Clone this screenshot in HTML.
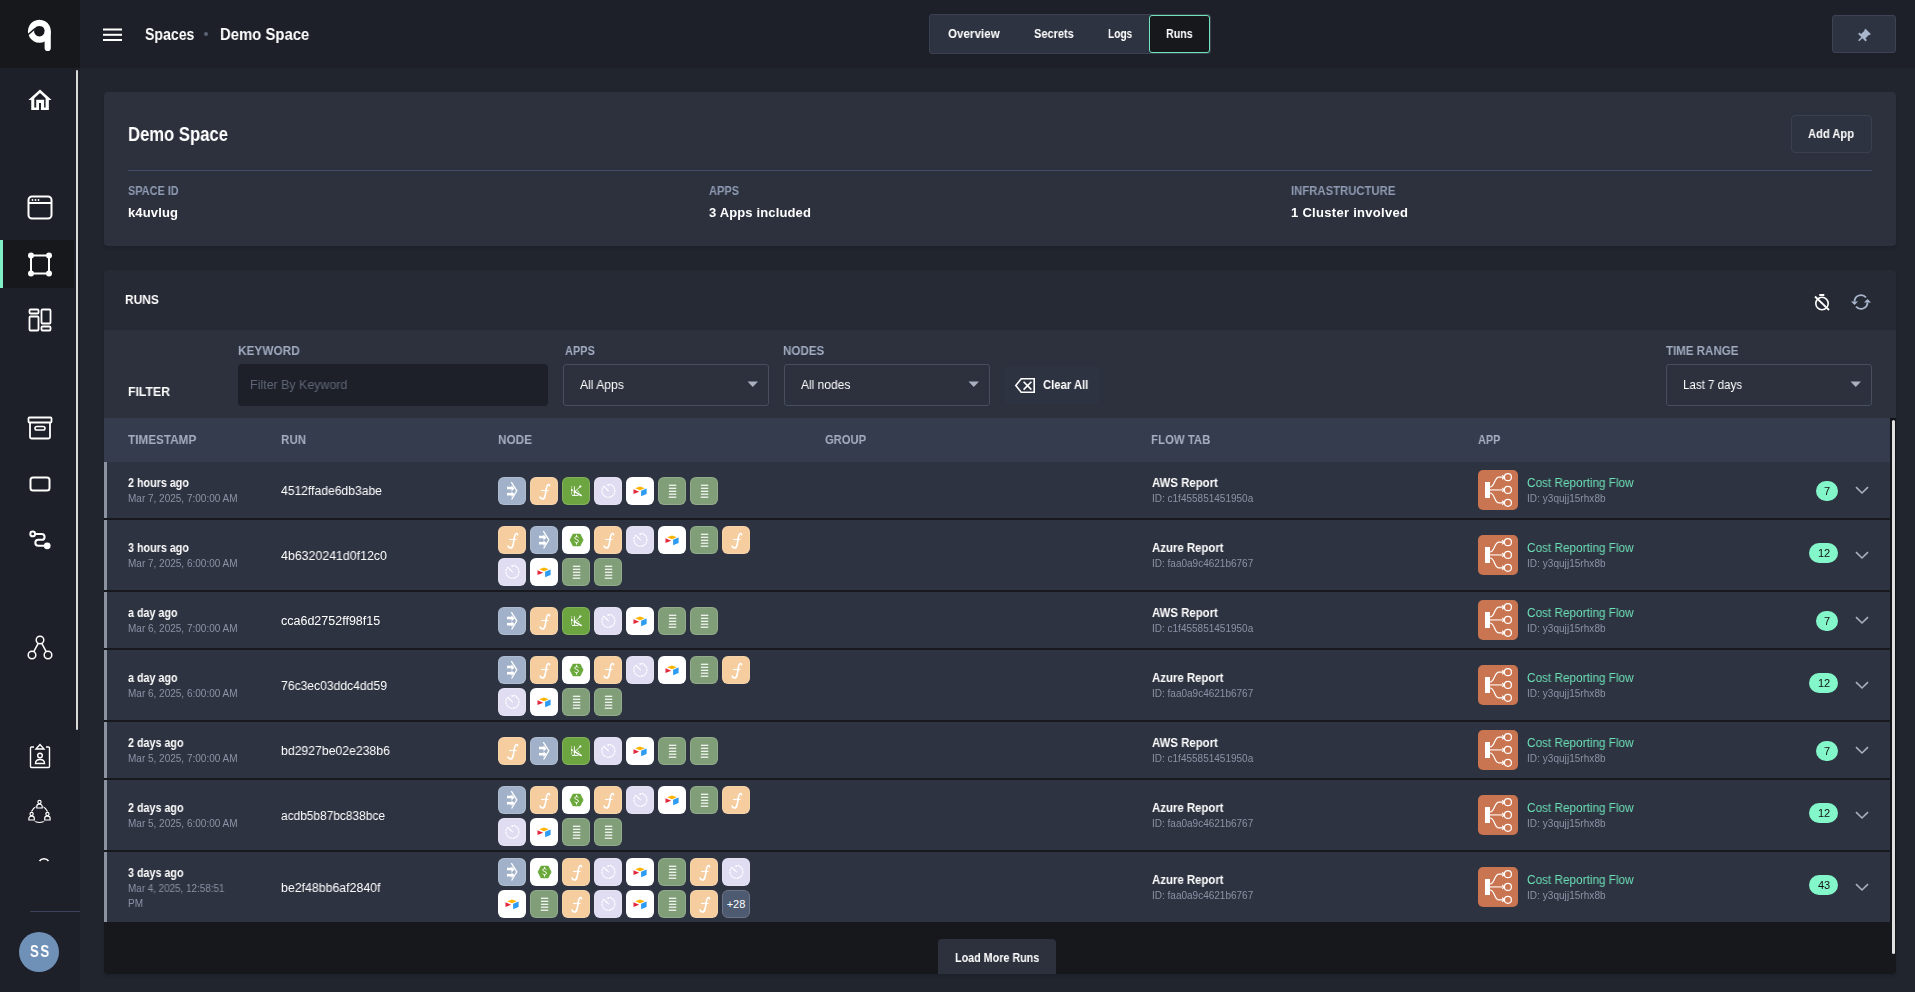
<!DOCTYPE html>
<html><head><meta charset="utf-8"><style>*{box-sizing:border-box;margin:0;padding:0}
html,body{width:1915px;height:992px;overflow:hidden;background:#21252e;font-family:"Liberation Sans",sans-serif;color:#fff}
.a{position:absolute}
.t{position:absolute;white-space:nowrap;will-change:transform}
svg{display:block}
</style></head><body>
<div class="a" style="left:0px;top:0px;width:80px;height:68px;background:#17181c;"></div>
<div class="a" style="left:80px;top:0px;width:1835px;height:68px;background:#1d2029;"></div>
<div class="a" style="left:0px;top:68px;width:80px;height:924px;background:#1d2029;"></div>
<div class="a" style="left:0px;top:240px;width:74px;height:48px;background:#17181c;"></div>
<div class="a" style="left:0px;top:240px;width:3px;height:48px;background:#7ff0c6;"></div>
<div class="a" style="left:76px;top:70px;width:2px;height:660px;background:#d9d9d9;border-radius:1px"></div>
<div class="a" style="left:30px;top:911px;width:50px;height:1px;background:#3b4259;"></div>
<div class="a" style="left:19px;top:932px;width:40px;height:40px;border-radius:50%;background:#6f91b8"></div>
<svg class="a" style="left:20px;top:12px;" width="40" height="46" viewBox="0 0 40 46"><path fill-rule="evenodd" d="M19.4 7.7a11.5 11.5 0 1 0 0.01 0zM19.4 13.9a5.3 5.3 0 1 1 -0.01 0z" fill="#fff"/><path d="M24.6 19.2h6.2v16.7a3.1 3.1 0 0 1 -6.2 0z" fill="#fff"/><line x1="6.5" y1="24" x2="15" y2="16.6" stroke="#17181c" stroke-width="1.5"/></svg>
<svg class="a" style="left:22px;top:82px;" width="36" height="36" viewBox="0 0 36 36"><path fill-rule="evenodd" d="M18 7.4L29.6 18.1H26.85V28H9.25V18.1H6.35zM18 10.9L23.6 16.3V25.4H12.3V16.3z" fill="#fff"/><path d="M14.2 28V17.8H22.1V28H18.9V21H17.05V28z" fill="#fff"/><rect x="17.05" y="21" width="1.85" height="7.5" fill="#1d2029"/></svg>
<svg class="a" style="left:27px;top:195px;" width="26" height="26" viewBox="0 0 26 26"><rect x="1.5" y="1.5" width="23" height="22" rx="3.5" fill="none" stroke="#fff" stroke-width="2"/><line x1="1.5" y1="8" x2="24.5" y2="8" stroke="#fff" stroke-width="2"/><circle cx="5.5" cy="5" r="0.9" fill="#fff"/><circle cx="8.5" cy="5" r="0.9" fill="#fff"/><circle cx="11.5" cy="5" r="0.9" fill="#fff"/></svg>
<svg class="a" style="left:27px;top:251px;" width="26" height="27" viewBox="0 0 26 27"><rect x="4" y="4.5" width="18" height="18" fill="none" stroke="#fff" stroke-width="2"/><circle cx="4" cy="4.5" r="3" fill="#fff"/><circle cx="22" cy="4.5" r="3" fill="#fff"/><circle cx="4" cy="22.5" r="3" fill="#fff"/><circle cx="22" cy="22.5" r="3" fill="#fff"/></svg>
<svg class="a" style="left:28px;top:308px;" width="24" height="24" viewBox="0 0 24 24"><rect x="1.5" y="1.5" width="9" height="4" rx="1" fill="none" stroke="#fff" stroke-width="1.8"/><rect x="1.5" y="8.5" width="9" height="14" rx="1" fill="none" stroke="#fff" stroke-width="1.8"/><rect x="13.5" y="1.5" width="9" height="14" rx="1" fill="none" stroke="#fff" stroke-width="1.8"/><rect x="13.5" y="18.5" width="9" height="4" rx="1" fill="none" stroke="#fff" stroke-width="1.8"/></svg>
<svg class="a" style="left:27px;top:416px;" width="26" height="24" viewBox="0 0 26 24"><rect x="1.5" y="1.5" width="23" height="5" rx="1" fill="none" stroke="#fff" stroke-width="1.8"/><path d="M3 6.5v14.5a1.5 1.5 0 0 0 1.5 1.5h17a1.5 1.5 0 0 0 1.5-1.5V6.5" fill="none" stroke="#fff" stroke-width="1.8"/><rect x="8" y="10.5" width="10" height="3.5" rx="1.75" fill="none" stroke="#fff" stroke-width="1.6"/></svg>
<svg class="a" style="left:29px;top:476px;" width="22" height="16" viewBox="0 0 22 16"><rect x="1.5" y="1.5" width="19" height="13" rx="2.5" fill="none" stroke="#fff" stroke-width="2"/></svg>
<svg class="a" style="left:28px;top:529px;" width="24" height="22" viewBox="0 0 24 22"><circle cx="4.7" cy="4.9" r="2.4" fill="none" stroke="#fff" stroke-width="2"/><circle cx="19.2" cy="16.8" r="3.4" fill="#fff"/><path d="M6.8 4.9H13.6A2.97 2.97 0 0 1 13.6 10.85H10.3A2.97 2.97 0 0 0 10.3 16.8H17" fill="none" stroke="#fff" stroke-width="2"/></svg>
<svg class="a" style="left:27px;top:635px;" width="26" height="26" viewBox="0 0 26 26"><circle cx="13" cy="5" r="3.8" fill="none" stroke="#fff" stroke-width="1.5"/><circle cx="5" cy="20" r="3.8" fill="none" stroke="#fff" stroke-width="1.5"/><circle cx="21" cy="20" r="3.8" fill="none" stroke="#fff" stroke-width="1.5"/><line x1="11.2" y1="8.3" x2="6.8" y2="16.7" stroke="#fff" stroke-width="1.5"/><line x1="14.8" y1="8.3" x2="19.2" y2="16.7" stroke="#fff" stroke-width="1.5"/></svg>
<svg class="a" style="left:29px;top:743px;" width="22" height="26" viewBox="0 0 22 26"><path d="M5 4H2.5A1 1 0 0 0 1.5 5v18.5a1 1 0 0 0 1 1h17a1 1 0 0 0 1-1V5a1 1 0 0 0-1-1H17" fill="none" stroke="#fff" stroke-width="1.4"/><path d="M7 6l4-4.5 4 4.5z" fill="none" stroke="#fff" stroke-width="1.4"/><circle cx="11" cy="12.5" r="2.3" fill="none" stroke="#fff" stroke-width="1.4"/><path d="M6.5 20.5c0-3 2-4 4.5-4s4.5 1 4.5 4z" fill="none" stroke="#fff" stroke-width="1.4"/></svg>
<svg class="a" style="left:28px;top:799px;" width="24" height="25" viewBox="0 0 24 25"><circle cx="11.5" cy="15.2" r="8.3" fill="none" stroke="#fff" stroke-width="1.2"/><rect x="7.5" y="0.5" width="8" height="10" fill="#1d2029"/><circle cx="11.5" cy="3" r="1.6" fill="none" stroke="#fff" stroke-width="1.2"/><path d="M8.8 9v-1.6a2.2 2.2 0 0 1 2.2-2.2h1a2.2 2.2 0 0 1 2.2 2.2v1.6z" fill="none" stroke="#fff" stroke-width="1.2"/><rect x="-0.3999999999999999" y="12.5" width="8" height="10" fill="#1d2029"/><circle cx="3.6" cy="15" r="1.6" fill="none" stroke="#fff" stroke-width="1.2"/><path d="M0.8999999999999999 21v-1.6a2.2 2.2 0 0 1 2.2-2.2h1a2.2 2.2 0 0 1 2.2 2.2v1.6z" fill="none" stroke="#fff" stroke-width="1.2"/><rect x="15.399999999999999" y="12.5" width="8" height="10" fill="#1d2029"/><circle cx="19.4" cy="15" r="1.6" fill="none" stroke="#fff" stroke-width="1.2"/><path d="M16.7 21v-1.6a2.2 2.2 0 0 1 2.2-2.2h1a2.2 2.2 0 0 1 2.2 2.2v1.6z" fill="none" stroke="#fff" stroke-width="1.2"/></svg>
<svg class="a" style="left:38px;top:855px;" width="12" height="8" viewBox="0 0 12 8"><path d="M1.5 6a5 4 0 0 1 9 0" fill="none" stroke="#fff" stroke-width="1.5"/></svg>
<svg class="a" style="left:103px;top:28px;" width="20" height="14" viewBox="0 0 20 14"><rect x="0" y="0.5" width="19" height="2" fill="#fff"/><rect x="0" y="5.8" width="19" height="2" fill="#fff"/><rect x="0" y="11" width="19" height="2" fill="#fff"/></svg>
<div class="a" style="left:204px;top:32px;width:4px;height:4px;border-radius:50%;background:#5d6376"></div>
<div class="a" style="left:929px;top:14px;width:282px;height:40px;border-radius:3px;background:#2e3341;border:1px solid #3b4150"></div>
<div class="a" style="left:1149px;top:15px;width:61px;height:38px;border-radius:3px;background:#17181c;border:1.5px solid #6fe3ba"></div>
<div class="a" style="left:1832px;top:15px;width:64px;height:38px;border-radius:3px;background:#2e3341;border:1px solid #3d4354"></div>
<svg class="a" style="left:1850px;top:20px;" width="30" height="30" viewBox="0 0 30 30"><path transform="translate(13.2 16.3) rotate(45)" fill="#a9b5cc" d="M-3.8 -7H3.8V-5.2H3.1V0H5.3V1.9H0.75V6.4H-0.75V1.9H-5.3V0H-3.1V-5.2H-3.8Z"/></svg>
<div class="a" style="left:104px;top:92px;width:1792px;height:154px;background:#2c313d;border-radius:4px;box-shadow:0 2px 3px rgba(0,0,0,.12)"></div>
<div class="a" style="left:128px;top:170px;width:1744px;height:1px;background:#434c66;"></div>
<div class="a" style="left:1791px;top:115px;width:81px;height:38px;border-radius:4px;background:#2e3341;border:1px solid #3a404f"></div>
<div class="a" style="left:104px;top:270px;width:1792px;height:704px;background:#262a35;border-radius:4px;box-shadow:0 2px 3px rgba(0,0,0,.12)"></div>
<div class="a" style="left:104px;top:330px;width:1792px;height:88px;background:#2c313d;"></div>
<div class="a" style="left:104px;top:418px;width:1786px;height:44px;background:#353c4e;"></div>
<div class="a" style="left:104px;top:922px;width:1792px;height:52px;background:#17181c;border-radius:0 0 4px 4px"></div>
<svg class="a" style="left:1812px;top:292px;" width="20" height="20" viewBox="0 0 20 20"><rect x="7.3" y="2" width="5" height="2" fill="#fff"/><circle cx="10" cy="11.5" r="6.2" fill="none" stroke="#fff" stroke-width="1.6"/><line x1="3" y1="4.5" x2="17" y2="18" stroke="#fff" stroke-width="1.8"/></svg>
<svg class="a" style="left:1850px;top:292px;" width="22" height="20" viewBox="0 0 22 20"><path d="M4.5 9.5a6.5 6.5 0 0 1 11.5-4" fill="none" stroke="#a9b5cc" stroke-width="1.8"/><path d="M17.5 10.5a6.5 6.5 0 0 1-11.5 4" fill="none" stroke="#a9b5cc" stroke-width="1.8"/><path d="M1 9.5h7l-3.5 3.5z" fill="#a9b5cc"/><path d="M21 10.5h-7l3.5-3.5z" fill="#a9b5cc"/></svg>
<div class="a" style="left:238px;top:364px;width:310px;height:42px;border-radius:4px;background:#1d2029"></div>
<div class="a" style="left:563px;top:364px;width:206px;height:42px;border-radius:3px;background:#2c313d;border:1px solid #474e5e"></div>
<svg class="a" style="left:747px;top:381px;" width="12" height="7" viewBox="0 0 12 7"><path d="M0.5 0.5h10.5L5.75 6z" fill="#a9b0bf"/></svg>
<div class="a" style="left:784px;top:364px;width:206px;height:42px;border-radius:3px;background:#2c313d;border:1px solid #474e5e"></div>
<svg class="a" style="left:968px;top:381px;" width="12" height="7" viewBox="0 0 12 7"><path d="M0.5 0.5h10.5L5.75 6z" fill="#a9b0bf"/></svg>
<div class="a" style="left:1666px;top:364px;width:206px;height:42px;border-radius:3px;background:#2c313d;border:1px solid #474e5e"></div>
<svg class="a" style="left:1850px;top:381px;" width="12" height="7" viewBox="0 0 12 7"><path d="M0.5 0.5h10.5L5.75 6z" fill="#a9b0bf"/></svg>
<div class="a" style="left:1005px;top:366px;width:94px;height:38px;border-radius:4px;background:#2e3342"></div>
<svg class="a" style="left:1014px;top:377px;" width="23" height="18" viewBox="0 0 23 18"><path d="M7.2 1.8H20.2V15.3H7.2L1.8 8.55z" fill="none" stroke="#fff" stroke-width="1.6" stroke-linejoin="miter"/><path d="M9.6 4.8l7.8 7.8M17.4 4.8l-7.8 7.8" stroke="#fff" stroke-width="1.6"/></svg>
<div class="a" style="left:104px;top:462px;width:1786px;height:56px;background:#2e3341;"></div>
<div class="a" style="left:104px;top:462px;width:3px;height:56px;background:#8b93a3;"></div>
<div class="a" style="left:104px;top:518px;width:1786px;height:2px;background:#18191d;"></div>
<div class="a" style="left:498px;top:477.0px;width:28px;height:28px;border-radius:6px;background:#a0b1c9;box-shadow:inset 0 0 0 1px rgba(255,255,255,.14)"></div>
<svg class="a" style="left:498px;top:477.0px;" width="28" height="28" viewBox="0 0 28 28"><rect x="9" y="9.7" width="5.5" height="2.6" fill="#fff"/><rect x="9" y="15.9" width="5.5" height="2.6" fill="#fff"/><path d="M13.3 5.2L18.8 13.8 13.6 22.5" fill="none" stroke="#fff" stroke-width="1.3"/><path d="M13.5 8.5l3 3-3 3z M13.5 14.5l3 2.5-3 3z" fill="#fff"/></svg>
<div class="a" style="left:530px;top:477.0px;width:28px;height:28px;border-radius:6px;background:#f5cd9e;box-shadow:inset 0 0 0 1px rgba(255,255,255,.14)"></div>
<svg class="a" style="left:530px;top:477.0px;" width="28" height="28" viewBox="0 0 28 28"><path d="M19.6 8.6c-.2-1.3-1.3-1.4-2-.6-1.6 1.7-1.6 7.5-2.6 11.2-.6 2.3-1.8 2.9-2.9 2.7-1-.2-1.7-1-2-1.8" fill="none" stroke="#fff" stroke-width="1.7" stroke-linecap="round"/><line x1="11" y1="13.5" x2="18.7" y2="13.5" stroke="#fff" stroke-width="1.1"/></svg>
<div class="a" style="left:562px;top:477.0px;width:28px;height:28px;border-radius:6px;background:#6da540;box-shadow:inset 0 0 0 1px rgba(255,255,255,.14)"></div>
<svg class="a" style="left:562px;top:477.0px;" width="28" height="28" viewBox="0 0 28 28"><g stroke="#fff" fill="none"><line x1="9.6" y1="9.3" x2="9.6" y2="18" stroke-width="1" stroke-dasharray=".9 .5" opacity=".8"/><line x1="12.4" y1="9.3" x2="12.4" y2="18" stroke-width=".9"/><line x1="10" y1="18.4" x2="16.5" y2="18.4" stroke-width="1"/><path d="M12.7 14.7L18.3 9.6" stroke-width=".9"/><path d="M17 9.4h2.6M18.3 8.1v2.6" stroke-width=".8"/><path d="M13 14.9L19.2 18.5" stroke-width="1.5" stroke-linecap="round"/><path d="M15.3 13.5l2 2" stroke-width=".9"/></g><circle cx="9.9" cy="13.3" r="1" fill="#fff"/><circle cx="12.7" cy="14.7" r="1.2" fill="#fff"/></svg>
<div class="a" style="left:594px;top:477.0px;width:28px;height:28px;border-radius:6px;background:#e0dcf2;box-shadow:inset 0 0 0 1px rgba(255,255,255,.14)"></div>
<svg class="a" style="left:594px;top:477.0px;" width="28" height="28" viewBox="0 0 28 28"><path d="M15.6 7.4A6.5 6.5 0 1 1 9.8 9.2" fill="none" stroke="#fff" stroke-width="1.2" stroke-dasharray="2.2 .5"/><line x1="10" y1="9.4" x2="14.4" y2="13.9" stroke="#fff" stroke-width="1.2" stroke-linecap="round"/><circle cx="14.3" cy="8" r="1.05" fill="#fff"/></svg>
<div class="a" style="left:626px;top:477.0px;width:28px;height:28px;border-radius:6px;background:#ffffff;box-shadow:inset 0 0 0 1px rgba(255,255,255,.14)"></div>
<svg class="a" style="left:626px;top:477.0px;" width="28" height="28" viewBox="0 0 28 28"><path d="M14 9.5l4.8 1.8-4.8 1.9-4.8-1.9z" fill="#fcb400"/><path d="M15.1 13.8v5.5l5.5-2.2v-5.5z" fill="#2d9cf0"/><path d="M7.5 12.3v4.8l5.7-2.3z" fill="#e0283c"/></svg>
<div class="a" style="left:658px;top:477.0px;width:28px;height:28px;border-radius:6px;background:#809e77;box-shadow:inset 0 0 0 1px rgba(255,255,255,.14)"></div>
<svg class="a" style="left:658px;top:477.0px;" width="28" height="28" viewBox="0 0 28 28"><g stroke="#fff" stroke-width="1.3" opacity=".9"><line x1="10.9" y1="8.3" x2="18.3" y2="8.3"/><line x1="10.9" y1="11.3" x2="18.3" y2="11.3"/><line x1="10.9" y1="14.3" x2="18.3" y2="14.3"/><line x1="10.9" y1="17.2" x2="18.3" y2="17.2"/><line x1="10.7" y1="20.2" x2="18.3" y2="20.2"/></g></svg>
<div class="a" style="left:690px;top:477.0px;width:28px;height:28px;border-radius:6px;background:#809e77;box-shadow:inset 0 0 0 1px rgba(255,255,255,.14)"></div>
<svg class="a" style="left:690px;top:477.0px;" width="28" height="28" viewBox="0 0 28 28"><g stroke="#fff" stroke-width="1.3" opacity=".9"><line x1="10.9" y1="8.3" x2="18.3" y2="8.3"/><line x1="10.9" y1="11.3" x2="18.3" y2="11.3"/><line x1="10.9" y1="14.3" x2="18.3" y2="14.3"/><line x1="10.9" y1="17.2" x2="18.3" y2="17.2"/><line x1="10.7" y1="20.2" x2="18.3" y2="20.2"/></g></svg>
<div class="a" style="left:1478px;top:470.0px;width:40px;height:40px;background:#c97551;border-radius:5px"></div>
<svg class="a" style="left:1478px;top:470.0px;" width="40" height="40" viewBox="0 0 40 40"><rect x="7" y="12" width="5" height="16" fill="#fff"/><g fill="none" stroke="#fff" stroke-width="1.2"><path d="M12 17c5 0 4-9.8 9-9.8h5.4"/><path d="M12 19.9h14.4" stroke-width="1.6" stroke="#f0d2c4"/><path d="M12 23c5 0 4 9.8 9 9.8h5.4"/><circle cx="29.9" cy="7.2" r="3.5"/><circle cx="29.9" cy="19.9" r="3.5"/><circle cx="29.9" cy="32.8" r="3.5"/><path d="M24.2 5.2l2.2 2-2.2 2M24.2 17.9l2.2 2-2.2 2M24.2 30.8l2.2 2-2.2 2"/></g></svg>
<div class="a" style="left:1816px;top:481.0px;width:22px;height:20px;border-radius:10px;background:#84f7ca"></div>
<svg class="a" style="left:1855px;top:486.0px;" width="14" height="9" viewBox="0 0 14 9"><path d="M1 1.2l6 5.8 6-5.8" fill="none" stroke="#a9b0c0" stroke-width="1.6"/></svg>
<div class="a" style="left:104px;top:520px;width:1786px;height:70px;background:#2e3341;"></div>
<div class="a" style="left:104px;top:520px;width:3px;height:70px;background:#8b93a3;"></div>
<div class="a" style="left:104px;top:590px;width:1786px;height:2px;background:#18191d;"></div>
<div class="a" style="left:498px;top:526.0px;width:28px;height:28px;border-radius:6px;background:#f5cd9e;box-shadow:inset 0 0 0 1px rgba(255,255,255,.14)"></div>
<svg class="a" style="left:498px;top:526.0px;" width="28" height="28" viewBox="0 0 28 28"><path d="M19.6 8.6c-.2-1.3-1.3-1.4-2-.6-1.6 1.7-1.6 7.5-2.6 11.2-.6 2.3-1.8 2.9-2.9 2.7-1-.2-1.7-1-2-1.8" fill="none" stroke="#fff" stroke-width="1.7" stroke-linecap="round"/><line x1="11" y1="13.5" x2="18.7" y2="13.5" stroke="#fff" stroke-width="1.1"/></svg>
<div class="a" style="left:530px;top:526.0px;width:28px;height:28px;border-radius:6px;background:#a0b1c9;box-shadow:inset 0 0 0 1px rgba(255,255,255,.14)"></div>
<svg class="a" style="left:530px;top:526.0px;" width="28" height="28" viewBox="0 0 28 28"><rect x="9" y="9.7" width="5.5" height="2.6" fill="#fff"/><rect x="9" y="15.9" width="5.5" height="2.6" fill="#fff"/><path d="M13.3 5.2L18.8 13.8 13.6 22.5" fill="none" stroke="#fff" stroke-width="1.3"/><path d="M13.5 8.5l3 3-3 3z M13.5 14.5l3 2.5-3 3z" fill="#fff"/></svg>
<div class="a" style="left:562px;top:526.0px;width:28px;height:28px;border-radius:6px;background:#ffffff;box-shadow:inset 0 0 0 1px rgba(255,255,255,.14)"></div>
<svg class="a" style="left:562px;top:526.0px;" width="28" height="28" viewBox="0 0 28 28"><path d="M11 8.1h7.2l3 5.9-3 5.9H11L8 14z" fill="#6aa83a" stroke="#6aa83a" stroke-width=".6" stroke-linejoin="round"/><path d="M16.3 11.6c-.4-.7-1-1-1.8-1-1 0-1.7.5-1.7 1.3 0 1.9 3.6 1.1 3.6 3.3 0 .9-.8 1.5-1.9 1.5-.9 0-1.6-.4-2-1.1M14.6 8.9v1.7M14.6 16.7v2" fill="none" stroke="#fff" stroke-width="1"/></svg>
<div class="a" style="left:594px;top:526.0px;width:28px;height:28px;border-radius:6px;background:#f5cd9e;box-shadow:inset 0 0 0 1px rgba(255,255,255,.14)"></div>
<svg class="a" style="left:594px;top:526.0px;" width="28" height="28" viewBox="0 0 28 28"><path d="M19.6 8.6c-.2-1.3-1.3-1.4-2-.6-1.6 1.7-1.6 7.5-2.6 11.2-.6 2.3-1.8 2.9-2.9 2.7-1-.2-1.7-1-2-1.8" fill="none" stroke="#fff" stroke-width="1.7" stroke-linecap="round"/><line x1="11" y1="13.5" x2="18.7" y2="13.5" stroke="#fff" stroke-width="1.1"/></svg>
<div class="a" style="left:626px;top:526.0px;width:28px;height:28px;border-radius:6px;background:#e0dcf2;box-shadow:inset 0 0 0 1px rgba(255,255,255,.14)"></div>
<svg class="a" style="left:626px;top:526.0px;" width="28" height="28" viewBox="0 0 28 28"><path d="M15.6 7.4A6.5 6.5 0 1 1 9.8 9.2" fill="none" stroke="#fff" stroke-width="1.2" stroke-dasharray="2.2 .5"/><line x1="10" y1="9.4" x2="14.4" y2="13.9" stroke="#fff" stroke-width="1.2" stroke-linecap="round"/><circle cx="14.3" cy="8" r="1.05" fill="#fff"/></svg>
<div class="a" style="left:658px;top:526.0px;width:28px;height:28px;border-radius:6px;background:#ffffff;box-shadow:inset 0 0 0 1px rgba(255,255,255,.14)"></div>
<svg class="a" style="left:658px;top:526.0px;" width="28" height="28" viewBox="0 0 28 28"><path d="M14 9.5l4.8 1.8-4.8 1.9-4.8-1.9z" fill="#fcb400"/><path d="M15.1 13.8v5.5l5.5-2.2v-5.5z" fill="#2d9cf0"/><path d="M7.5 12.3v4.8l5.7-2.3z" fill="#e0283c"/></svg>
<div class="a" style="left:690px;top:526.0px;width:28px;height:28px;border-radius:6px;background:#809e77;box-shadow:inset 0 0 0 1px rgba(255,255,255,.14)"></div>
<svg class="a" style="left:690px;top:526.0px;" width="28" height="28" viewBox="0 0 28 28"><g stroke="#fff" stroke-width="1.3" opacity=".9"><line x1="10.9" y1="8.3" x2="18.3" y2="8.3"/><line x1="10.9" y1="11.3" x2="18.3" y2="11.3"/><line x1="10.9" y1="14.3" x2="18.3" y2="14.3"/><line x1="10.9" y1="17.2" x2="18.3" y2="17.2"/><line x1="10.7" y1="20.2" x2="18.3" y2="20.2"/></g></svg>
<div class="a" style="left:722px;top:526.0px;width:28px;height:28px;border-radius:6px;background:#f5cd9e;box-shadow:inset 0 0 0 1px rgba(255,255,255,.14)"></div>
<svg class="a" style="left:722px;top:526.0px;" width="28" height="28" viewBox="0 0 28 28"><path d="M19.6 8.6c-.2-1.3-1.3-1.4-2-.6-1.6 1.7-1.6 7.5-2.6 11.2-.6 2.3-1.8 2.9-2.9 2.7-1-.2-1.7-1-2-1.8" fill="none" stroke="#fff" stroke-width="1.7" stroke-linecap="round"/><line x1="11" y1="13.5" x2="18.7" y2="13.5" stroke="#fff" stroke-width="1.1"/></svg>
<div class="a" style="left:498px;top:558.0px;width:28px;height:28px;border-radius:6px;background:#e0dcf2;box-shadow:inset 0 0 0 1px rgba(255,255,255,.14)"></div>
<svg class="a" style="left:498px;top:558.0px;" width="28" height="28" viewBox="0 0 28 28"><path d="M15.6 7.4A6.5 6.5 0 1 1 9.8 9.2" fill="none" stroke="#fff" stroke-width="1.2" stroke-dasharray="2.2 .5"/><line x1="10" y1="9.4" x2="14.4" y2="13.9" stroke="#fff" stroke-width="1.2" stroke-linecap="round"/><circle cx="14.3" cy="8" r="1.05" fill="#fff"/></svg>
<div class="a" style="left:530px;top:558.0px;width:28px;height:28px;border-radius:6px;background:#ffffff;box-shadow:inset 0 0 0 1px rgba(255,255,255,.14)"></div>
<svg class="a" style="left:530px;top:558.0px;" width="28" height="28" viewBox="0 0 28 28"><path d="M14 9.5l4.8 1.8-4.8 1.9-4.8-1.9z" fill="#fcb400"/><path d="M15.1 13.8v5.5l5.5-2.2v-5.5z" fill="#2d9cf0"/><path d="M7.5 12.3v4.8l5.7-2.3z" fill="#e0283c"/></svg>
<div class="a" style="left:562px;top:558.0px;width:28px;height:28px;border-radius:6px;background:#809e77;box-shadow:inset 0 0 0 1px rgba(255,255,255,.14)"></div>
<svg class="a" style="left:562px;top:558.0px;" width="28" height="28" viewBox="0 0 28 28"><g stroke="#fff" stroke-width="1.3" opacity=".9"><line x1="10.9" y1="8.3" x2="18.3" y2="8.3"/><line x1="10.9" y1="11.3" x2="18.3" y2="11.3"/><line x1="10.9" y1="14.3" x2="18.3" y2="14.3"/><line x1="10.9" y1="17.2" x2="18.3" y2="17.2"/><line x1="10.7" y1="20.2" x2="18.3" y2="20.2"/></g></svg>
<div class="a" style="left:594px;top:558.0px;width:28px;height:28px;border-radius:6px;background:#809e77;box-shadow:inset 0 0 0 1px rgba(255,255,255,.14)"></div>
<svg class="a" style="left:594px;top:558.0px;" width="28" height="28" viewBox="0 0 28 28"><g stroke="#fff" stroke-width="1.3" opacity=".9"><line x1="10.9" y1="8.3" x2="18.3" y2="8.3"/><line x1="10.9" y1="11.3" x2="18.3" y2="11.3"/><line x1="10.9" y1="14.3" x2="18.3" y2="14.3"/><line x1="10.9" y1="17.2" x2="18.3" y2="17.2"/><line x1="10.7" y1="20.2" x2="18.3" y2="20.2"/></g></svg>
<div class="a" style="left:1478px;top:535.0px;width:40px;height:40px;background:#c97551;border-radius:5px"></div>
<svg class="a" style="left:1478px;top:535.0px;" width="40" height="40" viewBox="0 0 40 40"><rect x="7" y="12" width="5" height="16" fill="#fff"/><g fill="none" stroke="#fff" stroke-width="1.2"><path d="M12 17c5 0 4-9.8 9-9.8h5.4"/><path d="M12 19.9h14.4" stroke-width="1.6" stroke="#f0d2c4"/><path d="M12 23c5 0 4 9.8 9 9.8h5.4"/><circle cx="29.9" cy="7.2" r="3.5"/><circle cx="29.9" cy="19.9" r="3.5"/><circle cx="29.9" cy="32.8" r="3.5"/><path d="M24.2 5.2l2.2 2-2.2 2M24.2 17.9l2.2 2-2.2 2M24.2 30.8l2.2 2-2.2 2"/></g></svg>
<div class="a" style="left:1809px;top:543.0px;width:29px;height:20px;border-radius:10px;background:#84f7ca"></div>
<svg class="a" style="left:1855px;top:551.0px;" width="14" height="9" viewBox="0 0 14 9"><path d="M1 1.2l6 5.8 6-5.8" fill="none" stroke="#a9b0c0" stroke-width="1.6"/></svg>
<div class="a" style="left:104px;top:592px;width:1786px;height:56px;background:#2e3341;"></div>
<div class="a" style="left:104px;top:592px;width:3px;height:56px;background:#8b93a3;"></div>
<div class="a" style="left:104px;top:648px;width:1786px;height:2px;background:#18191d;"></div>
<div class="a" style="left:498px;top:607.0px;width:28px;height:28px;border-radius:6px;background:#a0b1c9;box-shadow:inset 0 0 0 1px rgba(255,255,255,.14)"></div>
<svg class="a" style="left:498px;top:607.0px;" width="28" height="28" viewBox="0 0 28 28"><rect x="9" y="9.7" width="5.5" height="2.6" fill="#fff"/><rect x="9" y="15.9" width="5.5" height="2.6" fill="#fff"/><path d="M13.3 5.2L18.8 13.8 13.6 22.5" fill="none" stroke="#fff" stroke-width="1.3"/><path d="M13.5 8.5l3 3-3 3z M13.5 14.5l3 2.5-3 3z" fill="#fff"/></svg>
<div class="a" style="left:530px;top:607.0px;width:28px;height:28px;border-radius:6px;background:#f5cd9e;box-shadow:inset 0 0 0 1px rgba(255,255,255,.14)"></div>
<svg class="a" style="left:530px;top:607.0px;" width="28" height="28" viewBox="0 0 28 28"><path d="M19.6 8.6c-.2-1.3-1.3-1.4-2-.6-1.6 1.7-1.6 7.5-2.6 11.2-.6 2.3-1.8 2.9-2.9 2.7-1-.2-1.7-1-2-1.8" fill="none" stroke="#fff" stroke-width="1.7" stroke-linecap="round"/><line x1="11" y1="13.5" x2="18.7" y2="13.5" stroke="#fff" stroke-width="1.1"/></svg>
<div class="a" style="left:562px;top:607.0px;width:28px;height:28px;border-radius:6px;background:#6da540;box-shadow:inset 0 0 0 1px rgba(255,255,255,.14)"></div>
<svg class="a" style="left:562px;top:607.0px;" width="28" height="28" viewBox="0 0 28 28"><g stroke="#fff" fill="none"><line x1="9.6" y1="9.3" x2="9.6" y2="18" stroke-width="1" stroke-dasharray=".9 .5" opacity=".8"/><line x1="12.4" y1="9.3" x2="12.4" y2="18" stroke-width=".9"/><line x1="10" y1="18.4" x2="16.5" y2="18.4" stroke-width="1"/><path d="M12.7 14.7L18.3 9.6" stroke-width=".9"/><path d="M17 9.4h2.6M18.3 8.1v2.6" stroke-width=".8"/><path d="M13 14.9L19.2 18.5" stroke-width="1.5" stroke-linecap="round"/><path d="M15.3 13.5l2 2" stroke-width=".9"/></g><circle cx="9.9" cy="13.3" r="1" fill="#fff"/><circle cx="12.7" cy="14.7" r="1.2" fill="#fff"/></svg>
<div class="a" style="left:594px;top:607.0px;width:28px;height:28px;border-radius:6px;background:#e0dcf2;box-shadow:inset 0 0 0 1px rgba(255,255,255,.14)"></div>
<svg class="a" style="left:594px;top:607.0px;" width="28" height="28" viewBox="0 0 28 28"><path d="M15.6 7.4A6.5 6.5 0 1 1 9.8 9.2" fill="none" stroke="#fff" stroke-width="1.2" stroke-dasharray="2.2 .5"/><line x1="10" y1="9.4" x2="14.4" y2="13.9" stroke="#fff" stroke-width="1.2" stroke-linecap="round"/><circle cx="14.3" cy="8" r="1.05" fill="#fff"/></svg>
<div class="a" style="left:626px;top:607.0px;width:28px;height:28px;border-radius:6px;background:#ffffff;box-shadow:inset 0 0 0 1px rgba(255,255,255,.14)"></div>
<svg class="a" style="left:626px;top:607.0px;" width="28" height="28" viewBox="0 0 28 28"><path d="M14 9.5l4.8 1.8-4.8 1.9-4.8-1.9z" fill="#fcb400"/><path d="M15.1 13.8v5.5l5.5-2.2v-5.5z" fill="#2d9cf0"/><path d="M7.5 12.3v4.8l5.7-2.3z" fill="#e0283c"/></svg>
<div class="a" style="left:658px;top:607.0px;width:28px;height:28px;border-radius:6px;background:#809e77;box-shadow:inset 0 0 0 1px rgba(255,255,255,.14)"></div>
<svg class="a" style="left:658px;top:607.0px;" width="28" height="28" viewBox="0 0 28 28"><g stroke="#fff" stroke-width="1.3" opacity=".9"><line x1="10.9" y1="8.3" x2="18.3" y2="8.3"/><line x1="10.9" y1="11.3" x2="18.3" y2="11.3"/><line x1="10.9" y1="14.3" x2="18.3" y2="14.3"/><line x1="10.9" y1="17.2" x2="18.3" y2="17.2"/><line x1="10.7" y1="20.2" x2="18.3" y2="20.2"/></g></svg>
<div class="a" style="left:690px;top:607.0px;width:28px;height:28px;border-radius:6px;background:#809e77;box-shadow:inset 0 0 0 1px rgba(255,255,255,.14)"></div>
<svg class="a" style="left:690px;top:607.0px;" width="28" height="28" viewBox="0 0 28 28"><g stroke="#fff" stroke-width="1.3" opacity=".9"><line x1="10.9" y1="8.3" x2="18.3" y2="8.3"/><line x1="10.9" y1="11.3" x2="18.3" y2="11.3"/><line x1="10.9" y1="14.3" x2="18.3" y2="14.3"/><line x1="10.9" y1="17.2" x2="18.3" y2="17.2"/><line x1="10.7" y1="20.2" x2="18.3" y2="20.2"/></g></svg>
<div class="a" style="left:1478px;top:600.0px;width:40px;height:40px;background:#c97551;border-radius:5px"></div>
<svg class="a" style="left:1478px;top:600.0px;" width="40" height="40" viewBox="0 0 40 40"><rect x="7" y="12" width="5" height="16" fill="#fff"/><g fill="none" stroke="#fff" stroke-width="1.2"><path d="M12 17c5 0 4-9.8 9-9.8h5.4"/><path d="M12 19.9h14.4" stroke-width="1.6" stroke="#f0d2c4"/><path d="M12 23c5 0 4 9.8 9 9.8h5.4"/><circle cx="29.9" cy="7.2" r="3.5"/><circle cx="29.9" cy="19.9" r="3.5"/><circle cx="29.9" cy="32.8" r="3.5"/><path d="M24.2 5.2l2.2 2-2.2 2M24.2 17.9l2.2 2-2.2 2M24.2 30.8l2.2 2-2.2 2"/></g></svg>
<div class="a" style="left:1816px;top:611.0px;width:22px;height:20px;border-radius:10px;background:#84f7ca"></div>
<svg class="a" style="left:1855px;top:616.0px;" width="14" height="9" viewBox="0 0 14 9"><path d="M1 1.2l6 5.8 6-5.8" fill="none" stroke="#a9b0c0" stroke-width="1.6"/></svg>
<div class="a" style="left:104px;top:650px;width:1786px;height:70px;background:#2e3341;"></div>
<div class="a" style="left:104px;top:650px;width:3px;height:70px;background:#8b93a3;"></div>
<div class="a" style="left:104px;top:720px;width:1786px;height:2px;background:#18191d;"></div>
<div class="a" style="left:498px;top:656.0px;width:28px;height:28px;border-radius:6px;background:#a0b1c9;box-shadow:inset 0 0 0 1px rgba(255,255,255,.14)"></div>
<svg class="a" style="left:498px;top:656.0px;" width="28" height="28" viewBox="0 0 28 28"><rect x="9" y="9.7" width="5.5" height="2.6" fill="#fff"/><rect x="9" y="15.9" width="5.5" height="2.6" fill="#fff"/><path d="M13.3 5.2L18.8 13.8 13.6 22.5" fill="none" stroke="#fff" stroke-width="1.3"/><path d="M13.5 8.5l3 3-3 3z M13.5 14.5l3 2.5-3 3z" fill="#fff"/></svg>
<div class="a" style="left:530px;top:656.0px;width:28px;height:28px;border-radius:6px;background:#f5cd9e;box-shadow:inset 0 0 0 1px rgba(255,255,255,.14)"></div>
<svg class="a" style="left:530px;top:656.0px;" width="28" height="28" viewBox="0 0 28 28"><path d="M19.6 8.6c-.2-1.3-1.3-1.4-2-.6-1.6 1.7-1.6 7.5-2.6 11.2-.6 2.3-1.8 2.9-2.9 2.7-1-.2-1.7-1-2-1.8" fill="none" stroke="#fff" stroke-width="1.7" stroke-linecap="round"/><line x1="11" y1="13.5" x2="18.7" y2="13.5" stroke="#fff" stroke-width="1.1"/></svg>
<div class="a" style="left:562px;top:656.0px;width:28px;height:28px;border-radius:6px;background:#ffffff;box-shadow:inset 0 0 0 1px rgba(255,255,255,.14)"></div>
<svg class="a" style="left:562px;top:656.0px;" width="28" height="28" viewBox="0 0 28 28"><path d="M11 8.1h7.2l3 5.9-3 5.9H11L8 14z" fill="#6aa83a" stroke="#6aa83a" stroke-width=".6" stroke-linejoin="round"/><path d="M16.3 11.6c-.4-.7-1-1-1.8-1-1 0-1.7.5-1.7 1.3 0 1.9 3.6 1.1 3.6 3.3 0 .9-.8 1.5-1.9 1.5-.9 0-1.6-.4-2-1.1M14.6 8.9v1.7M14.6 16.7v2" fill="none" stroke="#fff" stroke-width="1"/></svg>
<div class="a" style="left:594px;top:656.0px;width:28px;height:28px;border-radius:6px;background:#f5cd9e;box-shadow:inset 0 0 0 1px rgba(255,255,255,.14)"></div>
<svg class="a" style="left:594px;top:656.0px;" width="28" height="28" viewBox="0 0 28 28"><path d="M19.6 8.6c-.2-1.3-1.3-1.4-2-.6-1.6 1.7-1.6 7.5-2.6 11.2-.6 2.3-1.8 2.9-2.9 2.7-1-.2-1.7-1-2-1.8" fill="none" stroke="#fff" stroke-width="1.7" stroke-linecap="round"/><line x1="11" y1="13.5" x2="18.7" y2="13.5" stroke="#fff" stroke-width="1.1"/></svg>
<div class="a" style="left:626px;top:656.0px;width:28px;height:28px;border-radius:6px;background:#e0dcf2;box-shadow:inset 0 0 0 1px rgba(255,255,255,.14)"></div>
<svg class="a" style="left:626px;top:656.0px;" width="28" height="28" viewBox="0 0 28 28"><path d="M15.6 7.4A6.5 6.5 0 1 1 9.8 9.2" fill="none" stroke="#fff" stroke-width="1.2" stroke-dasharray="2.2 .5"/><line x1="10" y1="9.4" x2="14.4" y2="13.9" stroke="#fff" stroke-width="1.2" stroke-linecap="round"/><circle cx="14.3" cy="8" r="1.05" fill="#fff"/></svg>
<div class="a" style="left:658px;top:656.0px;width:28px;height:28px;border-radius:6px;background:#ffffff;box-shadow:inset 0 0 0 1px rgba(255,255,255,.14)"></div>
<svg class="a" style="left:658px;top:656.0px;" width="28" height="28" viewBox="0 0 28 28"><path d="M14 9.5l4.8 1.8-4.8 1.9-4.8-1.9z" fill="#fcb400"/><path d="M15.1 13.8v5.5l5.5-2.2v-5.5z" fill="#2d9cf0"/><path d="M7.5 12.3v4.8l5.7-2.3z" fill="#e0283c"/></svg>
<div class="a" style="left:690px;top:656.0px;width:28px;height:28px;border-radius:6px;background:#809e77;box-shadow:inset 0 0 0 1px rgba(255,255,255,.14)"></div>
<svg class="a" style="left:690px;top:656.0px;" width="28" height="28" viewBox="0 0 28 28"><g stroke="#fff" stroke-width="1.3" opacity=".9"><line x1="10.9" y1="8.3" x2="18.3" y2="8.3"/><line x1="10.9" y1="11.3" x2="18.3" y2="11.3"/><line x1="10.9" y1="14.3" x2="18.3" y2="14.3"/><line x1="10.9" y1="17.2" x2="18.3" y2="17.2"/><line x1="10.7" y1="20.2" x2="18.3" y2="20.2"/></g></svg>
<div class="a" style="left:722px;top:656.0px;width:28px;height:28px;border-radius:6px;background:#f5cd9e;box-shadow:inset 0 0 0 1px rgba(255,255,255,.14)"></div>
<svg class="a" style="left:722px;top:656.0px;" width="28" height="28" viewBox="0 0 28 28"><path d="M19.6 8.6c-.2-1.3-1.3-1.4-2-.6-1.6 1.7-1.6 7.5-2.6 11.2-.6 2.3-1.8 2.9-2.9 2.7-1-.2-1.7-1-2-1.8" fill="none" stroke="#fff" stroke-width="1.7" stroke-linecap="round"/><line x1="11" y1="13.5" x2="18.7" y2="13.5" stroke="#fff" stroke-width="1.1"/></svg>
<div class="a" style="left:498px;top:688.0px;width:28px;height:28px;border-radius:6px;background:#e0dcf2;box-shadow:inset 0 0 0 1px rgba(255,255,255,.14)"></div>
<svg class="a" style="left:498px;top:688.0px;" width="28" height="28" viewBox="0 0 28 28"><path d="M15.6 7.4A6.5 6.5 0 1 1 9.8 9.2" fill="none" stroke="#fff" stroke-width="1.2" stroke-dasharray="2.2 .5"/><line x1="10" y1="9.4" x2="14.4" y2="13.9" stroke="#fff" stroke-width="1.2" stroke-linecap="round"/><circle cx="14.3" cy="8" r="1.05" fill="#fff"/></svg>
<div class="a" style="left:530px;top:688.0px;width:28px;height:28px;border-radius:6px;background:#ffffff;box-shadow:inset 0 0 0 1px rgba(255,255,255,.14)"></div>
<svg class="a" style="left:530px;top:688.0px;" width="28" height="28" viewBox="0 0 28 28"><path d="M14 9.5l4.8 1.8-4.8 1.9-4.8-1.9z" fill="#fcb400"/><path d="M15.1 13.8v5.5l5.5-2.2v-5.5z" fill="#2d9cf0"/><path d="M7.5 12.3v4.8l5.7-2.3z" fill="#e0283c"/></svg>
<div class="a" style="left:562px;top:688.0px;width:28px;height:28px;border-radius:6px;background:#809e77;box-shadow:inset 0 0 0 1px rgba(255,255,255,.14)"></div>
<svg class="a" style="left:562px;top:688.0px;" width="28" height="28" viewBox="0 0 28 28"><g stroke="#fff" stroke-width="1.3" opacity=".9"><line x1="10.9" y1="8.3" x2="18.3" y2="8.3"/><line x1="10.9" y1="11.3" x2="18.3" y2="11.3"/><line x1="10.9" y1="14.3" x2="18.3" y2="14.3"/><line x1="10.9" y1="17.2" x2="18.3" y2="17.2"/><line x1="10.7" y1="20.2" x2="18.3" y2="20.2"/></g></svg>
<div class="a" style="left:594px;top:688.0px;width:28px;height:28px;border-radius:6px;background:#809e77;box-shadow:inset 0 0 0 1px rgba(255,255,255,.14)"></div>
<svg class="a" style="left:594px;top:688.0px;" width="28" height="28" viewBox="0 0 28 28"><g stroke="#fff" stroke-width="1.3" opacity=".9"><line x1="10.9" y1="8.3" x2="18.3" y2="8.3"/><line x1="10.9" y1="11.3" x2="18.3" y2="11.3"/><line x1="10.9" y1="14.3" x2="18.3" y2="14.3"/><line x1="10.9" y1="17.2" x2="18.3" y2="17.2"/><line x1="10.7" y1="20.2" x2="18.3" y2="20.2"/></g></svg>
<div class="a" style="left:1478px;top:665.0px;width:40px;height:40px;background:#c97551;border-radius:5px"></div>
<svg class="a" style="left:1478px;top:665.0px;" width="40" height="40" viewBox="0 0 40 40"><rect x="7" y="12" width="5" height="16" fill="#fff"/><g fill="none" stroke="#fff" stroke-width="1.2"><path d="M12 17c5 0 4-9.8 9-9.8h5.4"/><path d="M12 19.9h14.4" stroke-width="1.6" stroke="#f0d2c4"/><path d="M12 23c5 0 4 9.8 9 9.8h5.4"/><circle cx="29.9" cy="7.2" r="3.5"/><circle cx="29.9" cy="19.9" r="3.5"/><circle cx="29.9" cy="32.8" r="3.5"/><path d="M24.2 5.2l2.2 2-2.2 2M24.2 17.9l2.2 2-2.2 2M24.2 30.8l2.2 2-2.2 2"/></g></svg>
<div class="a" style="left:1809px;top:673.0px;width:29px;height:20px;border-radius:10px;background:#84f7ca"></div>
<svg class="a" style="left:1855px;top:681.0px;" width="14" height="9" viewBox="0 0 14 9"><path d="M1 1.2l6 5.8 6-5.8" fill="none" stroke="#a9b0c0" stroke-width="1.6"/></svg>
<div class="a" style="left:104px;top:722px;width:1786px;height:56px;background:#2e3341;"></div>
<div class="a" style="left:104px;top:722px;width:3px;height:56px;background:#8b93a3;"></div>
<div class="a" style="left:104px;top:778px;width:1786px;height:2px;background:#18191d;"></div>
<div class="a" style="left:498px;top:737.0px;width:28px;height:28px;border-radius:6px;background:#f5cd9e;box-shadow:inset 0 0 0 1px rgba(255,255,255,.14)"></div>
<svg class="a" style="left:498px;top:737.0px;" width="28" height="28" viewBox="0 0 28 28"><path d="M19.6 8.6c-.2-1.3-1.3-1.4-2-.6-1.6 1.7-1.6 7.5-2.6 11.2-.6 2.3-1.8 2.9-2.9 2.7-1-.2-1.7-1-2-1.8" fill="none" stroke="#fff" stroke-width="1.7" stroke-linecap="round"/><line x1="11" y1="13.5" x2="18.7" y2="13.5" stroke="#fff" stroke-width="1.1"/></svg>
<div class="a" style="left:530px;top:737.0px;width:28px;height:28px;border-radius:6px;background:#a0b1c9;box-shadow:inset 0 0 0 1px rgba(255,255,255,.14)"></div>
<svg class="a" style="left:530px;top:737.0px;" width="28" height="28" viewBox="0 0 28 28"><rect x="9" y="9.7" width="5.5" height="2.6" fill="#fff"/><rect x="9" y="15.9" width="5.5" height="2.6" fill="#fff"/><path d="M13.3 5.2L18.8 13.8 13.6 22.5" fill="none" stroke="#fff" stroke-width="1.3"/><path d="M13.5 8.5l3 3-3 3z M13.5 14.5l3 2.5-3 3z" fill="#fff"/></svg>
<div class="a" style="left:562px;top:737.0px;width:28px;height:28px;border-radius:6px;background:#6da540;box-shadow:inset 0 0 0 1px rgba(255,255,255,.14)"></div>
<svg class="a" style="left:562px;top:737.0px;" width="28" height="28" viewBox="0 0 28 28"><g stroke="#fff" fill="none"><line x1="9.6" y1="9.3" x2="9.6" y2="18" stroke-width="1" stroke-dasharray=".9 .5" opacity=".8"/><line x1="12.4" y1="9.3" x2="12.4" y2="18" stroke-width=".9"/><line x1="10" y1="18.4" x2="16.5" y2="18.4" stroke-width="1"/><path d="M12.7 14.7L18.3 9.6" stroke-width=".9"/><path d="M17 9.4h2.6M18.3 8.1v2.6" stroke-width=".8"/><path d="M13 14.9L19.2 18.5" stroke-width="1.5" stroke-linecap="round"/><path d="M15.3 13.5l2 2" stroke-width=".9"/></g><circle cx="9.9" cy="13.3" r="1" fill="#fff"/><circle cx="12.7" cy="14.7" r="1.2" fill="#fff"/></svg>
<div class="a" style="left:594px;top:737.0px;width:28px;height:28px;border-radius:6px;background:#e0dcf2;box-shadow:inset 0 0 0 1px rgba(255,255,255,.14)"></div>
<svg class="a" style="left:594px;top:737.0px;" width="28" height="28" viewBox="0 0 28 28"><path d="M15.6 7.4A6.5 6.5 0 1 1 9.8 9.2" fill="none" stroke="#fff" stroke-width="1.2" stroke-dasharray="2.2 .5"/><line x1="10" y1="9.4" x2="14.4" y2="13.9" stroke="#fff" stroke-width="1.2" stroke-linecap="round"/><circle cx="14.3" cy="8" r="1.05" fill="#fff"/></svg>
<div class="a" style="left:626px;top:737.0px;width:28px;height:28px;border-radius:6px;background:#ffffff;box-shadow:inset 0 0 0 1px rgba(255,255,255,.14)"></div>
<svg class="a" style="left:626px;top:737.0px;" width="28" height="28" viewBox="0 0 28 28"><path d="M14 9.5l4.8 1.8-4.8 1.9-4.8-1.9z" fill="#fcb400"/><path d="M15.1 13.8v5.5l5.5-2.2v-5.5z" fill="#2d9cf0"/><path d="M7.5 12.3v4.8l5.7-2.3z" fill="#e0283c"/></svg>
<div class="a" style="left:658px;top:737.0px;width:28px;height:28px;border-radius:6px;background:#809e77;box-shadow:inset 0 0 0 1px rgba(255,255,255,.14)"></div>
<svg class="a" style="left:658px;top:737.0px;" width="28" height="28" viewBox="0 0 28 28"><g stroke="#fff" stroke-width="1.3" opacity=".9"><line x1="10.9" y1="8.3" x2="18.3" y2="8.3"/><line x1="10.9" y1="11.3" x2="18.3" y2="11.3"/><line x1="10.9" y1="14.3" x2="18.3" y2="14.3"/><line x1="10.9" y1="17.2" x2="18.3" y2="17.2"/><line x1="10.7" y1="20.2" x2="18.3" y2="20.2"/></g></svg>
<div class="a" style="left:690px;top:737.0px;width:28px;height:28px;border-radius:6px;background:#809e77;box-shadow:inset 0 0 0 1px rgba(255,255,255,.14)"></div>
<svg class="a" style="left:690px;top:737.0px;" width="28" height="28" viewBox="0 0 28 28"><g stroke="#fff" stroke-width="1.3" opacity=".9"><line x1="10.9" y1="8.3" x2="18.3" y2="8.3"/><line x1="10.9" y1="11.3" x2="18.3" y2="11.3"/><line x1="10.9" y1="14.3" x2="18.3" y2="14.3"/><line x1="10.9" y1="17.2" x2="18.3" y2="17.2"/><line x1="10.7" y1="20.2" x2="18.3" y2="20.2"/></g></svg>
<div class="a" style="left:1478px;top:730.0px;width:40px;height:40px;background:#c97551;border-radius:5px"></div>
<svg class="a" style="left:1478px;top:730.0px;" width="40" height="40" viewBox="0 0 40 40"><rect x="7" y="12" width="5" height="16" fill="#fff"/><g fill="none" stroke="#fff" stroke-width="1.2"><path d="M12 17c5 0 4-9.8 9-9.8h5.4"/><path d="M12 19.9h14.4" stroke-width="1.6" stroke="#f0d2c4"/><path d="M12 23c5 0 4 9.8 9 9.8h5.4"/><circle cx="29.9" cy="7.2" r="3.5"/><circle cx="29.9" cy="19.9" r="3.5"/><circle cx="29.9" cy="32.8" r="3.5"/><path d="M24.2 5.2l2.2 2-2.2 2M24.2 17.9l2.2 2-2.2 2M24.2 30.8l2.2 2-2.2 2"/></g></svg>
<div class="a" style="left:1816px;top:741.0px;width:22px;height:20px;border-radius:10px;background:#84f7ca"></div>
<svg class="a" style="left:1855px;top:746.0px;" width="14" height="9" viewBox="0 0 14 9"><path d="M1 1.2l6 5.8 6-5.8" fill="none" stroke="#a9b0c0" stroke-width="1.6"/></svg>
<div class="a" style="left:104px;top:780px;width:1786px;height:70px;background:#2e3341;"></div>
<div class="a" style="left:104px;top:780px;width:3px;height:70px;background:#8b93a3;"></div>
<div class="a" style="left:104px;top:850px;width:1786px;height:2px;background:#18191d;"></div>
<div class="a" style="left:498px;top:786.0px;width:28px;height:28px;border-radius:6px;background:#a0b1c9;box-shadow:inset 0 0 0 1px rgba(255,255,255,.14)"></div>
<svg class="a" style="left:498px;top:786.0px;" width="28" height="28" viewBox="0 0 28 28"><rect x="9" y="9.7" width="5.5" height="2.6" fill="#fff"/><rect x="9" y="15.9" width="5.5" height="2.6" fill="#fff"/><path d="M13.3 5.2L18.8 13.8 13.6 22.5" fill="none" stroke="#fff" stroke-width="1.3"/><path d="M13.5 8.5l3 3-3 3z M13.5 14.5l3 2.5-3 3z" fill="#fff"/></svg>
<div class="a" style="left:530px;top:786.0px;width:28px;height:28px;border-radius:6px;background:#f5cd9e;box-shadow:inset 0 0 0 1px rgba(255,255,255,.14)"></div>
<svg class="a" style="left:530px;top:786.0px;" width="28" height="28" viewBox="0 0 28 28"><path d="M19.6 8.6c-.2-1.3-1.3-1.4-2-.6-1.6 1.7-1.6 7.5-2.6 11.2-.6 2.3-1.8 2.9-2.9 2.7-1-.2-1.7-1-2-1.8" fill="none" stroke="#fff" stroke-width="1.7" stroke-linecap="round"/><line x1="11" y1="13.5" x2="18.7" y2="13.5" stroke="#fff" stroke-width="1.1"/></svg>
<div class="a" style="left:562px;top:786.0px;width:28px;height:28px;border-radius:6px;background:#ffffff;box-shadow:inset 0 0 0 1px rgba(255,255,255,.14)"></div>
<svg class="a" style="left:562px;top:786.0px;" width="28" height="28" viewBox="0 0 28 28"><path d="M11 8.1h7.2l3 5.9-3 5.9H11L8 14z" fill="#6aa83a" stroke="#6aa83a" stroke-width=".6" stroke-linejoin="round"/><path d="M16.3 11.6c-.4-.7-1-1-1.8-1-1 0-1.7.5-1.7 1.3 0 1.9 3.6 1.1 3.6 3.3 0 .9-.8 1.5-1.9 1.5-.9 0-1.6-.4-2-1.1M14.6 8.9v1.7M14.6 16.7v2" fill="none" stroke="#fff" stroke-width="1"/></svg>
<div class="a" style="left:594px;top:786.0px;width:28px;height:28px;border-radius:6px;background:#f5cd9e;box-shadow:inset 0 0 0 1px rgba(255,255,255,.14)"></div>
<svg class="a" style="left:594px;top:786.0px;" width="28" height="28" viewBox="0 0 28 28"><path d="M19.6 8.6c-.2-1.3-1.3-1.4-2-.6-1.6 1.7-1.6 7.5-2.6 11.2-.6 2.3-1.8 2.9-2.9 2.7-1-.2-1.7-1-2-1.8" fill="none" stroke="#fff" stroke-width="1.7" stroke-linecap="round"/><line x1="11" y1="13.5" x2="18.7" y2="13.5" stroke="#fff" stroke-width="1.1"/></svg>
<div class="a" style="left:626px;top:786.0px;width:28px;height:28px;border-radius:6px;background:#e0dcf2;box-shadow:inset 0 0 0 1px rgba(255,255,255,.14)"></div>
<svg class="a" style="left:626px;top:786.0px;" width="28" height="28" viewBox="0 0 28 28"><path d="M15.6 7.4A6.5 6.5 0 1 1 9.8 9.2" fill="none" stroke="#fff" stroke-width="1.2" stroke-dasharray="2.2 .5"/><line x1="10" y1="9.4" x2="14.4" y2="13.9" stroke="#fff" stroke-width="1.2" stroke-linecap="round"/><circle cx="14.3" cy="8" r="1.05" fill="#fff"/></svg>
<div class="a" style="left:658px;top:786.0px;width:28px;height:28px;border-radius:6px;background:#ffffff;box-shadow:inset 0 0 0 1px rgba(255,255,255,.14)"></div>
<svg class="a" style="left:658px;top:786.0px;" width="28" height="28" viewBox="0 0 28 28"><path d="M14 9.5l4.8 1.8-4.8 1.9-4.8-1.9z" fill="#fcb400"/><path d="M15.1 13.8v5.5l5.5-2.2v-5.5z" fill="#2d9cf0"/><path d="M7.5 12.3v4.8l5.7-2.3z" fill="#e0283c"/></svg>
<div class="a" style="left:690px;top:786.0px;width:28px;height:28px;border-radius:6px;background:#809e77;box-shadow:inset 0 0 0 1px rgba(255,255,255,.14)"></div>
<svg class="a" style="left:690px;top:786.0px;" width="28" height="28" viewBox="0 0 28 28"><g stroke="#fff" stroke-width="1.3" opacity=".9"><line x1="10.9" y1="8.3" x2="18.3" y2="8.3"/><line x1="10.9" y1="11.3" x2="18.3" y2="11.3"/><line x1="10.9" y1="14.3" x2="18.3" y2="14.3"/><line x1="10.9" y1="17.2" x2="18.3" y2="17.2"/><line x1="10.7" y1="20.2" x2="18.3" y2="20.2"/></g></svg>
<div class="a" style="left:722px;top:786.0px;width:28px;height:28px;border-radius:6px;background:#f5cd9e;box-shadow:inset 0 0 0 1px rgba(255,255,255,.14)"></div>
<svg class="a" style="left:722px;top:786.0px;" width="28" height="28" viewBox="0 0 28 28"><path d="M19.6 8.6c-.2-1.3-1.3-1.4-2-.6-1.6 1.7-1.6 7.5-2.6 11.2-.6 2.3-1.8 2.9-2.9 2.7-1-.2-1.7-1-2-1.8" fill="none" stroke="#fff" stroke-width="1.7" stroke-linecap="round"/><line x1="11" y1="13.5" x2="18.7" y2="13.5" stroke="#fff" stroke-width="1.1"/></svg>
<div class="a" style="left:498px;top:818.0px;width:28px;height:28px;border-radius:6px;background:#e0dcf2;box-shadow:inset 0 0 0 1px rgba(255,255,255,.14)"></div>
<svg class="a" style="left:498px;top:818.0px;" width="28" height="28" viewBox="0 0 28 28"><path d="M15.6 7.4A6.5 6.5 0 1 1 9.8 9.2" fill="none" stroke="#fff" stroke-width="1.2" stroke-dasharray="2.2 .5"/><line x1="10" y1="9.4" x2="14.4" y2="13.9" stroke="#fff" stroke-width="1.2" stroke-linecap="round"/><circle cx="14.3" cy="8" r="1.05" fill="#fff"/></svg>
<div class="a" style="left:530px;top:818.0px;width:28px;height:28px;border-radius:6px;background:#ffffff;box-shadow:inset 0 0 0 1px rgba(255,255,255,.14)"></div>
<svg class="a" style="left:530px;top:818.0px;" width="28" height="28" viewBox="0 0 28 28"><path d="M14 9.5l4.8 1.8-4.8 1.9-4.8-1.9z" fill="#fcb400"/><path d="M15.1 13.8v5.5l5.5-2.2v-5.5z" fill="#2d9cf0"/><path d="M7.5 12.3v4.8l5.7-2.3z" fill="#e0283c"/></svg>
<div class="a" style="left:562px;top:818.0px;width:28px;height:28px;border-radius:6px;background:#809e77;box-shadow:inset 0 0 0 1px rgba(255,255,255,.14)"></div>
<svg class="a" style="left:562px;top:818.0px;" width="28" height="28" viewBox="0 0 28 28"><g stroke="#fff" stroke-width="1.3" opacity=".9"><line x1="10.9" y1="8.3" x2="18.3" y2="8.3"/><line x1="10.9" y1="11.3" x2="18.3" y2="11.3"/><line x1="10.9" y1="14.3" x2="18.3" y2="14.3"/><line x1="10.9" y1="17.2" x2="18.3" y2="17.2"/><line x1="10.7" y1="20.2" x2="18.3" y2="20.2"/></g></svg>
<div class="a" style="left:594px;top:818.0px;width:28px;height:28px;border-radius:6px;background:#809e77;box-shadow:inset 0 0 0 1px rgba(255,255,255,.14)"></div>
<svg class="a" style="left:594px;top:818.0px;" width="28" height="28" viewBox="0 0 28 28"><g stroke="#fff" stroke-width="1.3" opacity=".9"><line x1="10.9" y1="8.3" x2="18.3" y2="8.3"/><line x1="10.9" y1="11.3" x2="18.3" y2="11.3"/><line x1="10.9" y1="14.3" x2="18.3" y2="14.3"/><line x1="10.9" y1="17.2" x2="18.3" y2="17.2"/><line x1="10.7" y1="20.2" x2="18.3" y2="20.2"/></g></svg>
<div class="a" style="left:1478px;top:795.0px;width:40px;height:40px;background:#c97551;border-radius:5px"></div>
<svg class="a" style="left:1478px;top:795.0px;" width="40" height="40" viewBox="0 0 40 40"><rect x="7" y="12" width="5" height="16" fill="#fff"/><g fill="none" stroke="#fff" stroke-width="1.2"><path d="M12 17c5 0 4-9.8 9-9.8h5.4"/><path d="M12 19.9h14.4" stroke-width="1.6" stroke="#f0d2c4"/><path d="M12 23c5 0 4 9.8 9 9.8h5.4"/><circle cx="29.9" cy="7.2" r="3.5"/><circle cx="29.9" cy="19.9" r="3.5"/><circle cx="29.9" cy="32.8" r="3.5"/><path d="M24.2 5.2l2.2 2-2.2 2M24.2 17.9l2.2 2-2.2 2M24.2 30.8l2.2 2-2.2 2"/></g></svg>
<div class="a" style="left:1809px;top:803.0px;width:29px;height:20px;border-radius:10px;background:#84f7ca"></div>
<svg class="a" style="left:1855px;top:811.0px;" width="14" height="9" viewBox="0 0 14 9"><path d="M1 1.2l6 5.8 6-5.8" fill="none" stroke="#a9b0c0" stroke-width="1.6"/></svg>
<div class="a" style="left:104px;top:852px;width:1786px;height:70px;background:#2e3341;"></div>
<div class="a" style="left:104px;top:852px;width:3px;height:70px;background:#8b93a3;"></div>
<div class="a" style="left:498px;top:858.0px;width:28px;height:28px;border-radius:6px;background:#a0b1c9;box-shadow:inset 0 0 0 1px rgba(255,255,255,.14)"></div>
<svg class="a" style="left:498px;top:858.0px;" width="28" height="28" viewBox="0 0 28 28"><rect x="9" y="9.7" width="5.5" height="2.6" fill="#fff"/><rect x="9" y="15.9" width="5.5" height="2.6" fill="#fff"/><path d="M13.3 5.2L18.8 13.8 13.6 22.5" fill="none" stroke="#fff" stroke-width="1.3"/><path d="M13.5 8.5l3 3-3 3z M13.5 14.5l3 2.5-3 3z" fill="#fff"/></svg>
<div class="a" style="left:530px;top:858.0px;width:28px;height:28px;border-radius:6px;background:#ffffff;box-shadow:inset 0 0 0 1px rgba(255,255,255,.14)"></div>
<svg class="a" style="left:530px;top:858.0px;" width="28" height="28" viewBox="0 0 28 28"><path d="M11 8.1h7.2l3 5.9-3 5.9H11L8 14z" fill="#6aa83a" stroke="#6aa83a" stroke-width=".6" stroke-linejoin="round"/><path d="M16.3 11.6c-.4-.7-1-1-1.8-1-1 0-1.7.5-1.7 1.3 0 1.9 3.6 1.1 3.6 3.3 0 .9-.8 1.5-1.9 1.5-.9 0-1.6-.4-2-1.1M14.6 8.9v1.7M14.6 16.7v2" fill="none" stroke="#fff" stroke-width="1"/></svg>
<div class="a" style="left:562px;top:858.0px;width:28px;height:28px;border-radius:6px;background:#f5cd9e;box-shadow:inset 0 0 0 1px rgba(255,255,255,.14)"></div>
<svg class="a" style="left:562px;top:858.0px;" width="28" height="28" viewBox="0 0 28 28"><path d="M19.6 8.6c-.2-1.3-1.3-1.4-2-.6-1.6 1.7-1.6 7.5-2.6 11.2-.6 2.3-1.8 2.9-2.9 2.7-1-.2-1.7-1-2-1.8" fill="none" stroke="#fff" stroke-width="1.7" stroke-linecap="round"/><line x1="11" y1="13.5" x2="18.7" y2="13.5" stroke="#fff" stroke-width="1.1"/></svg>
<div class="a" style="left:594px;top:858.0px;width:28px;height:28px;border-radius:6px;background:#e0dcf2;box-shadow:inset 0 0 0 1px rgba(255,255,255,.14)"></div>
<svg class="a" style="left:594px;top:858.0px;" width="28" height="28" viewBox="0 0 28 28"><path d="M15.6 7.4A6.5 6.5 0 1 1 9.8 9.2" fill="none" stroke="#fff" stroke-width="1.2" stroke-dasharray="2.2 .5"/><line x1="10" y1="9.4" x2="14.4" y2="13.9" stroke="#fff" stroke-width="1.2" stroke-linecap="round"/><circle cx="14.3" cy="8" r="1.05" fill="#fff"/></svg>
<div class="a" style="left:626px;top:858.0px;width:28px;height:28px;border-radius:6px;background:#ffffff;box-shadow:inset 0 0 0 1px rgba(255,255,255,.14)"></div>
<svg class="a" style="left:626px;top:858.0px;" width="28" height="28" viewBox="0 0 28 28"><path d="M14 9.5l4.8 1.8-4.8 1.9-4.8-1.9z" fill="#fcb400"/><path d="M15.1 13.8v5.5l5.5-2.2v-5.5z" fill="#2d9cf0"/><path d="M7.5 12.3v4.8l5.7-2.3z" fill="#e0283c"/></svg>
<div class="a" style="left:658px;top:858.0px;width:28px;height:28px;border-radius:6px;background:#809e77;box-shadow:inset 0 0 0 1px rgba(255,255,255,.14)"></div>
<svg class="a" style="left:658px;top:858.0px;" width="28" height="28" viewBox="0 0 28 28"><g stroke="#fff" stroke-width="1.3" opacity=".9"><line x1="10.9" y1="8.3" x2="18.3" y2="8.3"/><line x1="10.9" y1="11.3" x2="18.3" y2="11.3"/><line x1="10.9" y1="14.3" x2="18.3" y2="14.3"/><line x1="10.9" y1="17.2" x2="18.3" y2="17.2"/><line x1="10.7" y1="20.2" x2="18.3" y2="20.2"/></g></svg>
<div class="a" style="left:690px;top:858.0px;width:28px;height:28px;border-radius:6px;background:#f5cd9e;box-shadow:inset 0 0 0 1px rgba(255,255,255,.14)"></div>
<svg class="a" style="left:690px;top:858.0px;" width="28" height="28" viewBox="0 0 28 28"><path d="M19.6 8.6c-.2-1.3-1.3-1.4-2-.6-1.6 1.7-1.6 7.5-2.6 11.2-.6 2.3-1.8 2.9-2.9 2.7-1-.2-1.7-1-2-1.8" fill="none" stroke="#fff" stroke-width="1.7" stroke-linecap="round"/><line x1="11" y1="13.5" x2="18.7" y2="13.5" stroke="#fff" stroke-width="1.1"/></svg>
<div class="a" style="left:722px;top:858.0px;width:28px;height:28px;border-radius:6px;background:#e0dcf2;box-shadow:inset 0 0 0 1px rgba(255,255,255,.14)"></div>
<svg class="a" style="left:722px;top:858.0px;" width="28" height="28" viewBox="0 0 28 28"><path d="M15.6 7.4A6.5 6.5 0 1 1 9.8 9.2" fill="none" stroke="#fff" stroke-width="1.2" stroke-dasharray="2.2 .5"/><line x1="10" y1="9.4" x2="14.4" y2="13.9" stroke="#fff" stroke-width="1.2" stroke-linecap="round"/><circle cx="14.3" cy="8" r="1.05" fill="#fff"/></svg>
<div class="a" style="left:498px;top:890.0px;width:28px;height:28px;border-radius:6px;background:#ffffff;box-shadow:inset 0 0 0 1px rgba(255,255,255,.14)"></div>
<svg class="a" style="left:498px;top:890.0px;" width="28" height="28" viewBox="0 0 28 28"><path d="M14 9.5l4.8 1.8-4.8 1.9-4.8-1.9z" fill="#fcb400"/><path d="M15.1 13.8v5.5l5.5-2.2v-5.5z" fill="#2d9cf0"/><path d="M7.5 12.3v4.8l5.7-2.3z" fill="#e0283c"/></svg>
<div class="a" style="left:530px;top:890.0px;width:28px;height:28px;border-radius:6px;background:#809e77;box-shadow:inset 0 0 0 1px rgba(255,255,255,.14)"></div>
<svg class="a" style="left:530px;top:890.0px;" width="28" height="28" viewBox="0 0 28 28"><g stroke="#fff" stroke-width="1.3" opacity=".9"><line x1="10.9" y1="8.3" x2="18.3" y2="8.3"/><line x1="10.9" y1="11.3" x2="18.3" y2="11.3"/><line x1="10.9" y1="14.3" x2="18.3" y2="14.3"/><line x1="10.9" y1="17.2" x2="18.3" y2="17.2"/><line x1="10.7" y1="20.2" x2="18.3" y2="20.2"/></g></svg>
<div class="a" style="left:562px;top:890.0px;width:28px;height:28px;border-radius:6px;background:#f5cd9e;box-shadow:inset 0 0 0 1px rgba(255,255,255,.14)"></div>
<svg class="a" style="left:562px;top:890.0px;" width="28" height="28" viewBox="0 0 28 28"><path d="M19.6 8.6c-.2-1.3-1.3-1.4-2-.6-1.6 1.7-1.6 7.5-2.6 11.2-.6 2.3-1.8 2.9-2.9 2.7-1-.2-1.7-1-2-1.8" fill="none" stroke="#fff" stroke-width="1.7" stroke-linecap="round"/><line x1="11" y1="13.5" x2="18.7" y2="13.5" stroke="#fff" stroke-width="1.1"/></svg>
<div class="a" style="left:594px;top:890.0px;width:28px;height:28px;border-radius:6px;background:#e0dcf2;box-shadow:inset 0 0 0 1px rgba(255,255,255,.14)"></div>
<svg class="a" style="left:594px;top:890.0px;" width="28" height="28" viewBox="0 0 28 28"><path d="M15.6 7.4A6.5 6.5 0 1 1 9.8 9.2" fill="none" stroke="#fff" stroke-width="1.2" stroke-dasharray="2.2 .5"/><line x1="10" y1="9.4" x2="14.4" y2="13.9" stroke="#fff" stroke-width="1.2" stroke-linecap="round"/><circle cx="14.3" cy="8" r="1.05" fill="#fff"/></svg>
<div class="a" style="left:626px;top:890.0px;width:28px;height:28px;border-radius:6px;background:#ffffff;box-shadow:inset 0 0 0 1px rgba(255,255,255,.14)"></div>
<svg class="a" style="left:626px;top:890.0px;" width="28" height="28" viewBox="0 0 28 28"><path d="M14 9.5l4.8 1.8-4.8 1.9-4.8-1.9z" fill="#fcb400"/><path d="M15.1 13.8v5.5l5.5-2.2v-5.5z" fill="#2d9cf0"/><path d="M7.5 12.3v4.8l5.7-2.3z" fill="#e0283c"/></svg>
<div class="a" style="left:658px;top:890.0px;width:28px;height:28px;border-radius:6px;background:#809e77;box-shadow:inset 0 0 0 1px rgba(255,255,255,.14)"></div>
<svg class="a" style="left:658px;top:890.0px;" width="28" height="28" viewBox="0 0 28 28"><g stroke="#fff" stroke-width="1.3" opacity=".9"><line x1="10.9" y1="8.3" x2="18.3" y2="8.3"/><line x1="10.9" y1="11.3" x2="18.3" y2="11.3"/><line x1="10.9" y1="14.3" x2="18.3" y2="14.3"/><line x1="10.9" y1="17.2" x2="18.3" y2="17.2"/><line x1="10.7" y1="20.2" x2="18.3" y2="20.2"/></g></svg>
<div class="a" style="left:690px;top:890.0px;width:28px;height:28px;border-radius:6px;background:#f5cd9e;box-shadow:inset 0 0 0 1px rgba(255,255,255,.14)"></div>
<svg class="a" style="left:690px;top:890.0px;" width="28" height="28" viewBox="0 0 28 28"><path d="M19.6 8.6c-.2-1.3-1.3-1.4-2-.6-1.6 1.7-1.6 7.5-2.6 11.2-.6 2.3-1.8 2.9-2.9 2.7-1-.2-1.7-1-2-1.8" fill="none" stroke="#fff" stroke-width="1.7" stroke-linecap="round"/><line x1="11" y1="13.5" x2="18.7" y2="13.5" stroke="#fff" stroke-width="1.1"/></svg>
<div class="a" style="left:722px;top:890.0px;width:28px;height:28px;border-radius:6px;background:#4e5a70;border:1px solid #6b7589"></div>
<svg class="a" style="left:722px;top:890.0px;" width="28" height="28" viewBox="0 0 28 28"><text x="14" y="18" font-size="11" font-family="Liberation Sans" fill="#fff" text-anchor="middle">+28</text></svg>
<div class="a" style="left:1478px;top:867.0px;width:40px;height:40px;background:#c97551;border-radius:5px"></div>
<svg class="a" style="left:1478px;top:867.0px;" width="40" height="40" viewBox="0 0 40 40"><rect x="7" y="12" width="5" height="16" fill="#fff"/><g fill="none" stroke="#fff" stroke-width="1.2"><path d="M12 17c5 0 4-9.8 9-9.8h5.4"/><path d="M12 19.9h14.4" stroke-width="1.6" stroke="#f0d2c4"/><path d="M12 23c5 0 4 9.8 9 9.8h5.4"/><circle cx="29.9" cy="7.2" r="3.5"/><circle cx="29.9" cy="19.9" r="3.5"/><circle cx="29.9" cy="32.8" r="3.5"/><path d="M24.2 5.2l2.2 2-2.2 2M24.2 17.9l2.2 2-2.2 2M24.2 30.8l2.2 2-2.2 2"/></g></svg>
<div class="a" style="left:1809px;top:875.0px;width:29px;height:20px;border-radius:10px;background:#84f7ca"></div>
<svg class="a" style="left:1855px;top:883.0px;" width="14" height="9" viewBox="0 0 14 9"><path d="M1 1.2l6 5.8 6-5.8" fill="none" stroke="#a9b0c0" stroke-width="1.6"/></svg>
<div class="a" style="left:1890px;top:418px;width:6px;height:504px;background:#121419;"></div>
<div class="a" style="left:1891.5px;top:420px;width:3px;height:534px;background:#e0e0e0;border-radius:1.5px"></div>
<div class="a" style="left:938px;top:939px;width:118px;height:35px;border-radius:4px 4px 0 0;background:#2c313d"></div>
<div class="t" id="t0" style="left:128.00px;top:476.53px;font-size:12px;line-height:12px;font-weight:bold;color:#fff;transform:scaleX(0.8950);transform-origin:0 0;">2 hours ago</div>
<div class="t" id="t1" style="left:128.00px;top:494.19px;font-size:10px;line-height:10px;font-weight:normal;color:#8a93a6;">Mar 7, 2025, 7:00:00 AM</div>
<div class="t" id="t2" style="left:280.50px;top:484.62px;font-size:12.5px;line-height:12.5px;font-weight:normal;color:#fff;transform:scaleX(0.9703);transform-origin:0 0;">4512ffade6db3abe</div>
<div class="t" id="t3" style="left:1152.00px;top:477.03px;font-size:12px;line-height:12px;font-weight:bold;color:#fff;transform:scaleX(0.9500);transform-origin:0 0;">AWS Report</div>
<div class="t" id="t4" style="left:1152.00px;top:493.69px;font-size:10px;line-height:10px;font-weight:normal;color:#8a93a6;">ID: c1f455851451950a</div>
<div class="t" id="t5" style="left:1526.50px;top:477.03px;font-size:12px;line-height:12px;font-weight:normal;color:#6cdfb5;transform:scaleX(0.9813);transform-origin:0 0;">Cost Reporting Flow</div>
<div class="t" id="t6" style="left:1526.50px;top:493.69px;font-size:10px;line-height:10px;font-weight:normal;color:#8a93a6;letter-spacing:0.046px;">ID: y3qujj15rhx8b</div>
<div class="t" id="t7" style="left:1827.00px;top:485.86px;font-size:11px;line-height:11px;font-weight:normal;color:#111;transform:translateX(-50%);">7</div>
<div class="t" id="t8" style="left:128.00px;top:541.53px;font-size:12px;line-height:12px;font-weight:bold;color:#fff;transform:scaleX(0.8950);transform-origin:0 0;">3 hours ago</div>
<div class="t" id="t9" style="left:128.00px;top:559.20px;font-size:10px;line-height:10px;font-weight:normal;color:#8a93a6;">Mar 7, 2025, 6:00:00 AM</div>
<div class="t" id="t10" style="left:280.50px;top:549.62px;font-size:12.5px;line-height:12.5px;font-weight:normal;color:#fff;transform:scaleX(0.9898);transform-origin:0 0;">4b6320241d0f12c0</div>
<div class="t" id="t11" style="left:1152.00px;top:542.03px;font-size:12px;line-height:12px;font-weight:bold;color:#fff;transform:scaleX(0.9500);transform-origin:0 0;">Azure Report</div>
<div class="t" id="t12" style="left:1152.00px;top:558.70px;font-size:10px;line-height:10px;font-weight:normal;color:#8a93a6;">ID: faa0a9c4621b6767</div>
<div class="t" id="t13" style="left:1526.50px;top:542.03px;font-size:12px;line-height:12px;font-weight:normal;color:#6cdfb5;transform:scaleX(0.9813);transform-origin:0 0;">Cost Reporting Flow</div>
<div class="t" id="t14" style="left:1526.50px;top:558.70px;font-size:10px;line-height:10px;font-weight:normal;color:#8a93a6;letter-spacing:0.046px;">ID: y3qujj15rhx8b</div>
<div class="t" id="t15" style="left:1823.50px;top:547.86px;font-size:11px;line-height:11px;font-weight:normal;color:#111;transform:translateX(-50%);">12</div>
<div class="t" id="t16" style="left:128.00px;top:606.53px;font-size:12px;line-height:12px;font-weight:bold;color:#fff;transform:scaleX(0.8950);transform-origin:0 0;">a day ago</div>
<div class="t" id="t17" style="left:128.00px;top:624.20px;font-size:10px;line-height:10px;font-weight:normal;color:#8a93a6;">Mar 6, 2025, 7:00:00 AM</div>
<div class="t" id="t18" style="left:280.50px;top:614.62px;font-size:12.5px;line-height:12.5px;font-weight:normal;color:#fff;transform:scaleX(0.9979);transform-origin:0 0;">cca6d2752ff98f15</div>
<div class="t" id="t19" style="left:1152.00px;top:607.03px;font-size:12px;line-height:12px;font-weight:bold;color:#fff;transform:scaleX(0.9500);transform-origin:0 0;">AWS Report</div>
<div class="t" id="t20" style="left:1152.00px;top:623.70px;font-size:10px;line-height:10px;font-weight:normal;color:#8a93a6;">ID: c1f455851451950a</div>
<div class="t" id="t21" style="left:1526.50px;top:607.03px;font-size:12px;line-height:12px;font-weight:normal;color:#6cdfb5;transform:scaleX(0.9813);transform-origin:0 0;">Cost Reporting Flow</div>
<div class="t" id="t22" style="left:1526.50px;top:623.70px;font-size:10px;line-height:10px;font-weight:normal;color:#8a93a6;letter-spacing:0.046px;">ID: y3qujj15rhx8b</div>
<div class="t" id="t23" style="left:1827.00px;top:615.86px;font-size:11px;line-height:11px;font-weight:normal;color:#111;transform:translateX(-50%);">7</div>
<div class="t" id="t24" style="left:128.00px;top:671.53px;font-size:12px;line-height:12px;font-weight:bold;color:#fff;transform:scaleX(0.8950);transform-origin:0 0;">a day ago</div>
<div class="t" id="t25" style="left:128.00px;top:689.20px;font-size:10px;line-height:10px;font-weight:normal;color:#8a93a6;">Mar 6, 2025, 6:00:00 AM</div>
<div class="t" id="t26" style="left:280.50px;top:679.62px;font-size:12.5px;line-height:12.5px;font-weight:normal;color:#fff;transform:scaleX(0.9709);transform-origin:0 0;">76c3ec03ddc4dd59</div>
<div class="t" id="t27" style="left:1152.00px;top:672.03px;font-size:12px;line-height:12px;font-weight:bold;color:#fff;transform:scaleX(0.9500);transform-origin:0 0;">Azure Report</div>
<div class="t" id="t28" style="left:1152.00px;top:688.70px;font-size:10px;line-height:10px;font-weight:normal;color:#8a93a6;">ID: faa0a9c4621b6767</div>
<div class="t" id="t29" style="left:1526.50px;top:672.03px;font-size:12px;line-height:12px;font-weight:normal;color:#6cdfb5;transform:scaleX(0.9813);transform-origin:0 0;">Cost Reporting Flow</div>
<div class="t" id="t30" style="left:1526.50px;top:688.70px;font-size:10px;line-height:10px;font-weight:normal;color:#8a93a6;letter-spacing:0.046px;">ID: y3qujj15rhx8b</div>
<div class="t" id="t31" style="left:1823.50px;top:677.86px;font-size:11px;line-height:11px;font-weight:normal;color:#111;transform:translateX(-50%);">12</div>
<div class="t" id="t32" style="left:128.00px;top:736.53px;font-size:12px;line-height:12px;font-weight:bold;color:#fff;transform:scaleX(0.8950);transform-origin:0 0;">2 days ago</div>
<div class="t" id="t33" style="left:128.00px;top:754.20px;font-size:10px;line-height:10px;font-weight:normal;color:#8a93a6;">Mar 5, 2025, 7:00:00 AM</div>
<div class="t" id="t34" style="left:280.50px;top:744.62px;font-size:12.5px;line-height:12.5px;font-weight:normal;color:#fff;transform:scaleX(0.9795);transform-origin:0 0;">bd2927be02e238b6</div>
<div class="t" id="t35" style="left:1152.00px;top:737.03px;font-size:12px;line-height:12px;font-weight:bold;color:#fff;transform:scaleX(0.9500);transform-origin:0 0;">AWS Report</div>
<div class="t" id="t36" style="left:1152.00px;top:753.70px;font-size:10px;line-height:10px;font-weight:normal;color:#8a93a6;">ID: c1f455851451950a</div>
<div class="t" id="t37" style="left:1526.50px;top:737.03px;font-size:12px;line-height:12px;font-weight:normal;color:#6cdfb5;transform:scaleX(0.9813);transform-origin:0 0;">Cost Reporting Flow</div>
<div class="t" id="t38" style="left:1526.50px;top:753.70px;font-size:10px;line-height:10px;font-weight:normal;color:#8a93a6;letter-spacing:0.046px;">ID: y3qujj15rhx8b</div>
<div class="t" id="t39" style="left:1827.00px;top:745.86px;font-size:11px;line-height:11px;font-weight:normal;color:#111;transform:translateX(-50%);">7</div>
<div class="t" id="t40" style="left:128.00px;top:801.53px;font-size:12px;line-height:12px;font-weight:bold;color:#fff;transform:scaleX(0.8950);transform-origin:0 0;">2 days ago</div>
<div class="t" id="t41" style="left:128.00px;top:819.20px;font-size:10px;line-height:10px;font-weight:normal;color:#8a93a6;">Mar 5, 2025, 6:00:00 AM</div>
<div class="t" id="t42" style="left:280.50px;top:809.62px;font-size:12.5px;line-height:12.5px;font-weight:normal;color:#fff;transform:scaleX(0.9526);transform-origin:0 0;">acdb5b87bc838bce</div>
<div class="t" id="t43" style="left:1152.00px;top:802.03px;font-size:12px;line-height:12px;font-weight:bold;color:#fff;transform:scaleX(0.9500);transform-origin:0 0;">Azure Report</div>
<div class="t" id="t44" style="left:1152.00px;top:818.70px;font-size:10px;line-height:10px;font-weight:normal;color:#8a93a6;">ID: faa0a9c4621b6767</div>
<div class="t" id="t45" style="left:1526.50px;top:802.03px;font-size:12px;line-height:12px;font-weight:normal;color:#6cdfb5;transform:scaleX(0.9813);transform-origin:0 0;">Cost Reporting Flow</div>
<div class="t" id="t46" style="left:1526.50px;top:818.70px;font-size:10px;line-height:10px;font-weight:normal;color:#8a93a6;letter-spacing:0.046px;">ID: y3qujj15rhx8b</div>
<div class="t" id="t47" style="left:1823.50px;top:807.86px;font-size:11px;line-height:11px;font-weight:normal;color:#111;transform:translateX(-50%);">12</div>
<div class="t" id="t48" style="left:128.00px;top:866.53px;font-size:12px;line-height:12px;font-weight:bold;color:#fff;transform:scaleX(0.8950);transform-origin:0 0;">3 days ago</div>
<div class="t" id="t49" style="left:128.00px;top:884.20px;font-size:10px;line-height:10px;font-weight:normal;color:#8a93a6;transform:scaleX(0.9850);transform-origin:0 0;">Mar 4, 2025, 12:58:51</div>
<div class="t" id="t50" style="left:128.00px;top:899.20px;font-size:10px;line-height:10px;font-weight:normal;color:#8a93a6;">PM</div>
<div class="t" id="t51" style="left:280.50px;top:881.62px;font-size:12.5px;line-height:12.5px;font-weight:normal;color:#fff;transform:scaleX(0.9870);transform-origin:0 0;">be2f48bb6af2840f</div>
<div class="t" id="t52" style="left:1152.00px;top:874.03px;font-size:12px;line-height:12px;font-weight:bold;color:#fff;transform:scaleX(0.9500);transform-origin:0 0;">Azure Report</div>
<div class="t" id="t53" style="left:1152.00px;top:890.70px;font-size:10px;line-height:10px;font-weight:normal;color:#8a93a6;">ID: faa0a9c4621b6767</div>
<div class="t" id="t54" style="left:1526.50px;top:874.03px;font-size:12px;line-height:12px;font-weight:normal;color:#6cdfb5;transform:scaleX(0.9813);transform-origin:0 0;">Cost Reporting Flow</div>
<div class="t" id="t55" style="left:1526.50px;top:890.70px;font-size:10px;line-height:10px;font-weight:normal;color:#8a93a6;letter-spacing:0.046px;">ID: y3qujj15rhx8b</div>
<div class="t" id="t56" style="left:1823.50px;top:879.86px;font-size:11px;line-height:11px;font-weight:normal;color:#111;transform:translateX(-50%);">43</div>
<div class="t" id="t57" style="left:145.00px;top:25.88px;font-size:17px;line-height:17px;font-weight:bold;color:#fff;transform:scaleX(0.8293);transform-origin:0 0;">Spaces</div>
<div class="t" id="t58" style="left:220.00px;top:25.88px;font-size:17px;line-height:17px;font-weight:bold;color:#fff;transform:scaleX(0.8749);transform-origin:0 0;">Demo Space</div>
<div class="t" id="t59" style="left:947.50px;top:27.20px;font-size:13px;line-height:13px;font-weight:bold;color:#fff;transform:scaleX(0.8943);transform-origin:0 0;">Overview</div>
<div class="t" id="t60" style="left:1034.00px;top:27.20px;font-size:13px;line-height:13px;font-weight:bold;color:#fff;transform:scaleX(0.8449);transform-origin:0 0;">Secrets</div>
<div class="t" id="t61" style="left:1108.00px;top:27.20px;font-size:13px;line-height:13px;font-weight:bold;color:#fff;transform:scaleX(0.7786);transform-origin:0 0;">Logs</div>
<div class="t" id="t62" style="left:1166.00px;top:27.20px;font-size:13px;line-height:13px;font-weight:bold;color:#fff;transform:scaleX(0.8212);transform-origin:0 0;">Runs</div>
<div class="t" id="t63" style="left:128.00px;top:123.89px;font-size:20px;line-height:20px;font-weight:bold;color:#fff;transform:scaleX(0.8325);transform-origin:0 0;">Demo Space</div>
<div class="t" id="t64" style="left:128.00px;top:185.03px;font-size:12px;line-height:12px;font-weight:bold;color:#8f9bb3;transform:scaleX(0.9087);transform-origin:0 0;">SPACE ID</div>
<div class="t" id="t65" style="left:128.00px;top:206.20px;font-size:13px;line-height:13px;font-weight:bold;color:#fff;letter-spacing:0.136px;">k4uvlug</div>
<div class="t" id="t66" style="left:709.20px;top:185.03px;font-size:12px;line-height:12px;font-weight:bold;color:#8f9bb3;transform:scaleX(0.9182);transform-origin:0 0;">APPS</div>
<div class="t" id="t67" style="left:709.20px;top:206.20px;font-size:13px;line-height:13px;font-weight:bold;color:#fff;letter-spacing:0.139px;">3 Apps included</div>
<div class="t" id="t68" style="left:1290.70px;top:185.03px;font-size:12px;line-height:12px;font-weight:bold;color:#8f9bb3;transform:scaleX(0.9426);transform-origin:0 0;">INFRASTRUCTURE</div>
<div class="t" id="t69" style="left:1290.70px;top:206.20px;font-size:13px;line-height:13px;font-weight:bold;color:#fff;letter-spacing:0.292px;">1 Cluster involved</div>
<div class="t" id="t70" style="left:1808.20px;top:127.62px;font-size:12.5px;line-height:12.5px;font-weight:bold;color:#fff;transform:scaleX(0.8926);transform-origin:0 0;">Add App</div>
<div class="t" id="t71" style="left:124.50px;top:292.80px;font-size:13px;line-height:13px;font-weight:bold;color:#fff;transform:scaleX(0.9175);transform-origin:0 0;">RUNS</div>
<div class="t" id="t72" style="left:128.00px;top:384.80px;font-size:13px;line-height:13px;font-weight:bold;color:#fff;transform:scaleX(0.9415);transform-origin:0 0;">FILTER</div>
<div class="t" id="t73" style="left:237.70px;top:344.82px;font-size:12.5px;line-height:12.5px;font-weight:bold;color:#a0abc0;transform:scaleX(0.9456);transform-origin:0 0;">KEYWORD</div>
<div class="t" id="t74" style="left:249.60px;top:378.82px;font-size:12.5px;line-height:12.5px;font-weight:normal;color:#5f6677;transform:scaleX(0.9939);transform-origin:0 0;">Filter By Keyword</div>
<div class="t" id="t75" style="left:565.20px;top:344.92px;font-size:12.5px;line-height:12.5px;font-weight:bold;color:#a0abc0;transform:scaleX(0.8753);transform-origin:0 0;">APPS</div>
<div class="t" id="t76" style="left:579.80px;top:378.92px;font-size:12.5px;line-height:12.5px;font-weight:normal;color:#fff;transform:scaleX(0.9692);transform-origin:0 0;">All Apps</div>
<div class="t" id="t77" style="left:783.30px;top:344.92px;font-size:12.5px;line-height:12.5px;font-weight:bold;color:#a0abc0;transform:scaleX(0.9294);transform-origin:0 0;">NODES</div>
<div class="t" id="t78" style="left:800.60px;top:378.92px;font-size:12.5px;line-height:12.5px;font-weight:normal;color:#fff;transform:scaleX(0.9595);transform-origin:0 0;">All nodes</div>
<div class="t" id="t79" style="left:1042.70px;top:378.92px;font-size:12.5px;line-height:12.5px;font-weight:bold;color:#fff;transform:scaleX(0.9017);transform-origin:0 0;">Clear All</div>
<div class="t" id="t80" style="left:1666.20px;top:344.82px;font-size:12.5px;line-height:12.5px;font-weight:bold;color:#a0abc0;transform:scaleX(0.9215);transform-origin:0 0;">TIME RANGE</div>
<div class="t" id="t81" style="left:1683.30px;top:378.82px;font-size:12.5px;line-height:12.5px;font-weight:normal;color:#fff;transform:scaleX(0.9238);transform-origin:0 0;">Last 7 days</div>
<div class="t" id="t82" style="left:128.00px;top:432.80px;font-size:13px;line-height:13px;font-weight:bold;color:#a5aec0;transform:scaleX(0.9023);transform-origin:0 0;">TIMESTAMP</div>
<div class="t" id="t83" style="left:280.70px;top:432.80px;font-size:13px;line-height:13px;font-weight:bold;color:#a5aec0;transform:scaleX(0.8928);transform-origin:0 0;">RUN</div>
<div class="t" id="t84" style="left:498.40px;top:432.80px;font-size:13px;line-height:13px;font-weight:bold;color:#a5aec0;transform:scaleX(0.9027);transform-origin:0 0;">NODE</div>
<div class="t" id="t85" style="left:825.00px;top:432.80px;font-size:13px;line-height:13px;font-weight:bold;color:#a5aec0;transform:scaleX(0.8625);transform-origin:0 0;">GROUP</div>
<div class="t" id="t86" style="left:1151.40px;top:432.80px;font-size:13px;line-height:13px;font-weight:bold;color:#a5aec0;transform:scaleX(0.8775);transform-origin:0 0;">FLOW TAB</div>
<div class="t" id="t87" style="left:1478.40px;top:432.80px;font-size:13px;line-height:13px;font-weight:bold;color:#a5aec0;transform:scaleX(0.8352);transform-origin:0 0;">APP</div>
<div class="t" id="t88" style="left:954.70px;top:951.62px;font-size:12.5px;line-height:12.5px;font-weight:bold;color:#fff;transform:scaleX(0.8605);transform-origin:0 0;">Load More Runs</div>
<div class="t" id="t89" style="left:29.80px;top:942.50px;font-size:16.5px;line-height:16.5px;font-weight:bold;color:#fff;transform:scaleX(0.8000);transform-origin:0 0;letter-spacing:2px;">SS</div>
</body></html>
